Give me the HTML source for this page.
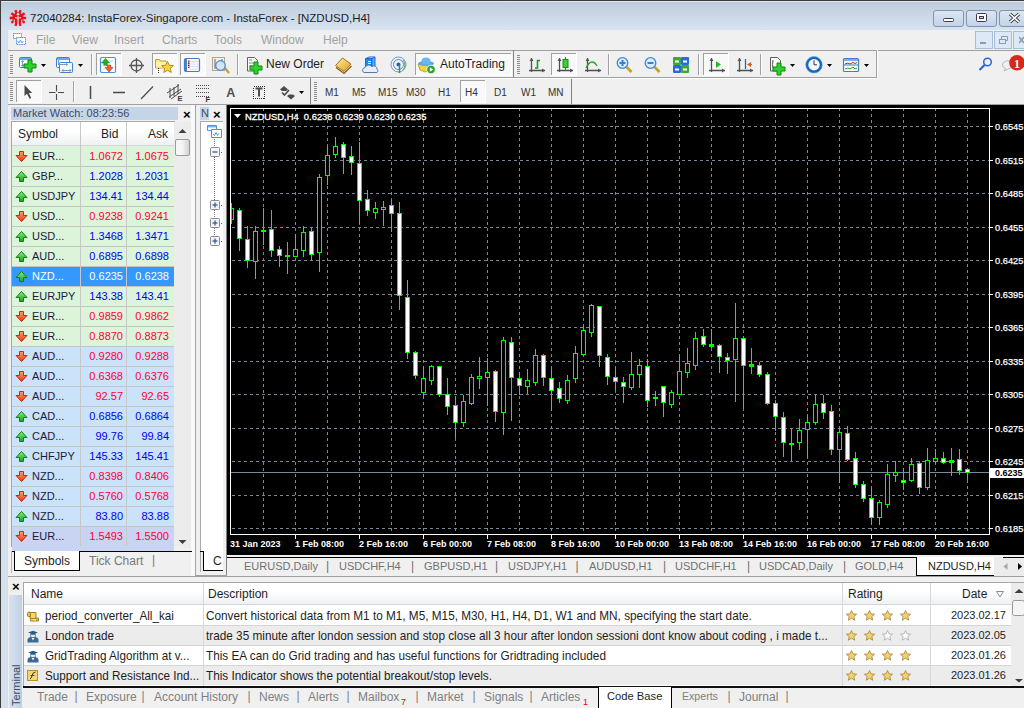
<!DOCTYPE html><html><head><meta charset="utf-8"><style>
html,body{margin:0;padding:0;width:1024px;height:708px;overflow:hidden;background:#f0f0f0;font-family:"Liberation Sans", sans-serif;}
.t{position:absolute;white-space:nowrap;line-height:1;}
</style></head><body>

<div style="position:absolute;left:0px;top:0px;width:1024px;height:30px;background:linear-gradient(#bccbdb,#d7e3f1)"></div>
<div style="position:absolute;left:0px;top:0px;width:1024px;height:1px;background:#3c3c3c"></div>
<div style="position:absolute;left:1px;top:1px;width:1023px;height:1px;background:#dfe7f0"></div>
<div style="position:absolute;left:0px;top:0px;width:1px;height:708px;background:#3c3c3c"></div>
<div style="position:absolute;left:1px;top:30px;width:7px;height:678px;background:#d5e1ef"></div>
<div class="t" style="left:30px;top:13px;font-size:11.5px;color:#1e1e1e">72040284: InstaForex-Singapore.com - InstaForex - [NZDUSD,H4]</div>
<div style="position:absolute;left:933px;top:10px;width:31px;height:17px;background:linear-gradient(#dbe6f2,#c3d3e6);border:1px solid #8294ae;border-radius:3px;box-sizing:border-box"></div>
<div style="position:absolute;left:966px;top:10px;width:31px;height:17px;background:linear-gradient(#dbe6f2,#c3d3e6);border:1px solid #8294ae;border-radius:3px;box-sizing:border-box"></div>
<div style="position:absolute;left:999px;top:10px;width:31px;height:17px;background:linear-gradient(#dbe6f2,#c3d3e6);border:1px solid #8294ae;border-radius:3px;box-sizing:border-box"></div>
<svg width="20" height="20" style="position:absolute;left:8px;top:8px" viewBox="8 8 20 20"><g fill="#e8141c"><circle cx="18" cy="18" r="5.6"/><rect x="16.8" y="9.8" width="2.4" height="3.5" transform="rotate(-90 18 18)"/><rect x="16.8" y="9.8" width="2.4" height="3.5" transform="rotate(-54 18 18)"/><rect x="16.8" y="9.8" width="2.4" height="3.5" transform="rotate(-18 18 18)"/><rect x="16.8" y="9.8" width="2.4" height="3.5" transform="rotate(18 18 18)"/><rect x="16.8" y="9.8" width="2.4" height="3.5" transform="rotate(54 18 18)"/><rect x="16.8" y="9.8" width="2.4" height="3.5" transform="rotate(90 18 18)"/><rect x="16.8" y="9.8" width="2.4" height="3.5" transform="rotate(126 18 18)"/><rect x="16.8" y="9.8" width="2.4" height="3.5" transform="rotate(162 18 18)"/><rect x="16.8" y="9.8" width="2.4" height="3.5" transform="rotate(198 18 18)"/><rect x="16.8" y="9.8" width="2.4" height="3.5" transform="rotate(234 18 18)"/><rect x="16.8" y="9.8" width="2.4" height="3.5" transform="rotate(270 18 18)"/></g><circle cx="18" cy="14.2" r="1.3" fill="#d4e0ee"/><path d="M15 17.5q3 1.5 6 0M18 16v9" stroke="#d4e0ee" stroke-width="1.2" fill="none"/><path d="M14.2 19.5v4M21.8 19.5v4" stroke="#d4e0ee" stroke-width="1"/></svg>
<div style="position:absolute;left:8px;top:30px;width:1016px;height:20px;background:#f0f0f0"></div>
<div class="t" style="left:36px;top:34px;font-size:12px;color:#a0a0a0">File</div>
<div class="t" style="left:72px;top:34px;font-size:12px;color:#a0a0a0">View</div>
<div class="t" style="left:114px;top:34px;font-size:12px;color:#a0a0a0">Insert</div>
<div class="t" style="left:162px;top:34px;font-size:12px;color:#a0a0a0">Charts</div>
<div class="t" style="left:214px;top:34px;font-size:12px;color:#a0a0a0">Tools</div>
<div class="t" style="left:261px;top:34px;font-size:12px;color:#a0a0a0">Window</div>
<div class="t" style="left:323px;top:34px;font-size:12px;color:#a0a0a0">Help</div>
<div style="position:absolute;left:975px;top:31px;width:18px;height:18px;background:#dde9f6;border:1px solid #a9bdd6;box-sizing:border-box"></div>
<div style="position:absolute;left:994px;top:31px;width:18px;height:18px;background:#dde9f6;border:1px solid #a9bdd6;box-sizing:border-box"></div>
<div style="position:absolute;left:1013px;top:31px;width:18px;height:18px;background:#dde9f6;border:1px solid #a9bdd6;box-sizing:border-box"></div>
<svg width="1024" height="50" style="position:absolute;left:0;top:0"><rect x="943.5" y="18.5" width="10" height="3" rx="1" fill="#fff" stroke="#3c3c4c" stroke-width="1"/><rect x="976.5" y="13.5" width="10" height="8" rx="1" fill="#fff" stroke="#3c3c4c" stroke-width="1"/><rect x="979.5" y="16.5" width="4" height="2" fill="#c8d4e4" stroke="#3c3c4c" stroke-width="1"/><path d="M1010 14l9 8M1019 14l-9 8" stroke="#3c3c4c" stroke-width="3.4"/><path d="M1010 14l9 8M1019 14l-9 8" stroke="#fff" stroke-width="1.6"/><path d="M13.5 33.5h8v5h-8z" fill="#fff" stroke="#4a8ae8" stroke-dasharray="1.2,0.6"/><path d="M16.5 37.5h9v7h-9z" fill="#fff" stroke="#4a8ae8" stroke-dasharray="1.2,0.6"/><path d="M17.5 41l1.5 2 1.5-3 1.5 3 1.5-2" stroke="#4a8ae8" fill="none" stroke-width="0.8"/><rect x="980" y="42" width="6" height="2" fill="#8a9ab0"/><rect x="999.5" y="39.5" width="6" height="4" fill="none" stroke="#8a9ab0"/><path d="M1001.5 39.5v-3h6v4h-2" fill="none" stroke="#8a9ab0"/><path d="M1019 37l5 6M1024 37l-5 6" stroke="#8a9ab0" stroke-width="1.5"/></svg>
<div style="position:absolute;left:8px;top:50px;width:1016px;height:1px;background:#a0a0a0"></div>
<div style="position:absolute;left:8px;top:104px;width:1016px;height:1px;background:#a0a0a0"></div>
<svg width="1024" height="55" viewBox="0 50 1024 55" style="position:absolute;left:0;top:50px" font-family="Liberation Sans, sans-serif"><rect x="10" y="55" width="3" height="1" fill="#8c8c8c"/><rect x="10" y="57" width="3" height="1" fill="#8c8c8c"/><rect x="10" y="59" width="3" height="1" fill="#8c8c8c"/><rect x="10" y="61" width="3" height="1" fill="#8c8c8c"/><rect x="10" y="63" width="3" height="1" fill="#8c8c8c"/><rect x="10" y="65" width="3" height="1" fill="#8c8c8c"/><rect x="10" y="67" width="3" height="1" fill="#8c8c8c"/><rect x="10" y="69" width="3" height="1" fill="#8c8c8c"/><rect x="10" y="71" width="3" height="1" fill="#8c8c8c"/><rect x="10" y="73" width="3" height="1" fill="#8c8c8c"/><rect x="19.5" y="57.5" width="12" height="10" rx="1" fill="#f4f8fc" stroke="#3f7fcf"/><rect x="20" y="58" width="11" height="2" fill="#6aa6e8"/><path d="M22.5 61v5" stroke="#7a9abb" stroke-width="1"/><path d="M21 62l1.5-1.5 1.5 1.5M21 65l1.5 1.5 1.5-1.5" stroke="#7a9abb" fill="none" stroke-width="0.9"/><path d="M28 60h4v4h4v4h-4v4h-4v-4h-4v-4h4z" fill="#2ed12e" stroke="#0b8a0b" stroke-width="1"/><path d="M41 64h5l-2.5 3z" fill="#000"/><rect x="56.5" y="57.5" width="13" height="10" rx="1" fill="#f4f8fc" stroke="#3f7fcf"/><rect x="57" y="58" width="12" height="2" fill="#6aa6e8"/><rect x="59.5" y="62.5" width="13" height="10" rx="1" fill="#f4f8fc" stroke="#3f7fcf"/><path d="M58.5 60v5M58.5 64.5h9M62 70.5h9" stroke="#7a9abb" stroke-width="1" fill="none"/><path d="M66 63l1.5 1.5-1.5 1.5M63.5 69l-1.5 1.5 1.5 1.5M69.5 69l1.5 1.5-1.5 1.5" stroke="#7a9abb" fill="none" stroke-width="0.9"/><path d="M78 64h5l-2.5 3z" fill="#000"/><rect x="91" y="54" width="1" height="21" fill="#a0a0a0"/><rect x="92" y="54" width="1" height="21" fill="#fff"/><rect x="96" y="53" width="25" height="22" fill="#f9f9f9"/><rect x="96" y="53" width="25" height="1" fill="#a0a0a0"/><rect x="96" y="53" width="1" height="22" fill="#a0a0a0"/><rect x="96" y="75" width="26" height="1" fill="#fff"/><rect x="121" y="53" width="1" height="22" fill="#fff"/><rect x="100.5" y="57.5" width="15" height="15" rx="1.5" fill="#fff" stroke="#4a90e0" stroke-width="1.2"/><path d="M101.5 63l4-4.5 4 4.5h-2.3v2.5h-3.4v-2.5z" fill="#22b022" stroke="#128012" stroke-width="0.6"/><path d="M107.3 65h3.4v2.5h2.3l-4 4.5-4-4.5h2.3z" fill="#f06030" stroke="#c03010" stroke-width="0.6"/><path d="M109 61h4M103 66h3M103 69h3" stroke="#c8d4e0" stroke-width="1"/><circle cx="136.5" cy="65.5" r="5.5" fill="none" stroke="#555" stroke-width="1.3"/><path d="M136.5 58v15M129 65.5h15" stroke="#555" stroke-width="1.3"/><rect x="152" y="53" width="25" height="22" fill="#f9f9f9"/><rect x="152" y="53" width="25" height="1" fill="#a0a0a0"/><rect x="152" y="53" width="1" height="22" fill="#a0a0a0"/><rect x="152" y="75" width="26" height="1" fill="#fff"/><rect x="177" y="53" width="1" height="22" fill="#fff"/><path d="M155.5 59.5h4l1 1.5h5.5v7h-10.5z" fill="#f8e58a" stroke="#c8a030" stroke-width="1"/><rect x="156" y="62" width="10" height="5.5" fill="#fdf0a8"/><path d="M158.5 68v1M158.5 70v1M158.5 72v1" stroke="#333" stroke-width="1"/><path d="M167.5 61.5l1.8 3.8 4.1.4-3.1 2.7.9 4-3.7-2.1-3.7 2.1.9-4-3.1-2.7 4.1-.4z" fill="#f6d44a" stroke="#b8901a" stroke-width="1"/><rect x="180" y="53" width="25" height="22" fill="#f9f9f9"/><rect x="180" y="53" width="25" height="1" fill="#a0a0a0"/><rect x="180" y="53" width="1" height="22" fill="#a0a0a0"/><rect x="180" y="75" width="26" height="1" fill="#fff"/><rect x="205" y="53" width="1" height="22" fill="#fff"/><rect x="184.5" y="58.5" width="15" height="13" rx="1.5" fill="#fff" stroke="#3f7fcf" stroke-width="1.2"/><rect x="185" y="59" width="2" height="12" fill="#4a80c8"/><path d="M189 61.5h10M189 64h10M189 66.5h10M189 69h10" stroke="#c0d4f2" stroke-width="0.8"/><rect x="188" y="60.5" width="1.5" height="1.5" fill="#e02020"/><rect x="188" y="62.5" width="1.5" height="1.5" fill="#333"/><rect x="188" y="64.5" width="1.5" height="1.5" fill="#333"/><rect x="188" y="66.5" width="1.5" height="1.5" fill="#e02020"/><rect x="212.5" y="57.5" width="12" height="13" fill="#f4f0e8" stroke="#b0a890" stroke-width="1"/><path d="M215 59v10M222 59v6" stroke="#666" stroke-width="1"/><path d="M225 68l4 5" stroke="#c8a020" stroke-width="2.2"/><circle cx="220.5" cy="65.5" r="4.8" fill="#cfe4f8" fill-opacity="0.85" stroke="#4a88d0" stroke-width="1.2"/><rect x="237" y="54" width="1" height="21" fill="#a0a0a0"/><rect x="238" y="54" width="1" height="21" fill="#fff"/><path d="M247.5 57.5h7l3 3v10.5h-10z" fill="#fafafa" stroke="#606060" stroke-width="1"/><path d="M249 60h3M249 63h6M249 66h4" stroke="#888" stroke-width="1"/><path d="M254 62h4v4h4v4h-4v4h-4v-4h-4v-4h4z" fill="#2ed12e" stroke="#0b8a0b" stroke-width="1"/><defs><linearGradient id="gb" x1="0" y1="0" x2="1" y2="1"><stop offset="0" stop-color="#fff0a0"/><stop offset="1" stop-color="#d8a020"/></linearGradient></defs><path d="M335.5 65.5l7-7.5 8.5 6-7 7.5z" fill="url(#gb)" stroke="#a87018" stroke-width="1"/><path d="M336 67.5l8 6 7.5-7.5" fill="none" stroke="#8a5a10" stroke-width="1.3"/><path d="M365.5 58.5h6.5v10h-6.5z" fill="#1a8af0" stroke="#1a6ad0" stroke-width="1"/><path d="M372 58.5l3-1.5v10l-3 1.5z" fill="#5ab0f8" stroke="#1a6ad0" stroke-width="1"/><path d="M366 58.5l3-1.5h6" fill="none" stroke="#1a6ad0"/><path d="M368 61.5h3M368 63.5h3" stroke="#e0f0ff" stroke-width="1"/><path d="M364 72.5a2.5 2.5 0 0 1 1-4.8a4 4 0 0 1 7-1a3 3 0 0 1 5 2.5a2 2 0 0 1 0 3.3z" fill="#e8eef6" stroke="#5a7aa8" stroke-width="1"/><circle cx="398.5" cy="64.5" r="7.5" fill="none" stroke="#6a9ad8" stroke-width="1"/><circle cx="398.5" cy="64.5" r="5" fill="none" stroke="#5a8ad0" stroke-width="1"/><circle cx="398.5" cy="64.5" r="2" fill="#2a5ac8"/><path d="M399.5 65v8" stroke="#2aa02a" stroke-width="1.5"/><path d="M403 60a7.5 7.5 0 0 1 0 10" stroke="#5aaa5a" stroke-width="1" fill="none"/><rect x="415" y="53" width="96" height="22" fill="#f9f9f9"/><rect x="415" y="53" width="96" height="1" fill="#a0a0a0"/><rect x="415" y="53" width="1" height="22" fill="#a0a0a0"/><rect x="415" y="75" width="97" height="1" fill="#fff"/><rect x="511" y="53" width="1" height="22" fill="#fff"/><path d="M420 70l-2-6h14l-2 6l-5 2z" fill="#f2d24a" stroke="#b8901a" stroke-width="0.8"/><ellipse cx="426" cy="63.5" rx="8" ry="2.5" fill="#5aa8e0"/><ellipse cx="426" cy="61" rx="4.5" ry="3.5" fill="#6ab8f0"/><circle cx="431" cy="69.5" r="4.3" fill="#22a822" stroke="#fff" stroke-width="0.8"/><path d="M429.8 67.2v4.6l3.5-2.3z" fill="#fff"/><rect x="513" y="50" width="1" height="27" fill="#808080"/><rect x="8" y="77" width="868" height="1" fill="#a0a0a0"/><rect x="8" y="78" width="868" height="1" fill="#fff"/><rect x="876" y="50" width="1" height="28" fill="#a0a0a0"/><rect x="877" y="50" width="1" height="28" fill="#fff"/><rect x="517" y="55" width="3" height="1" fill="#8c8c8c"/><rect x="517" y="57" width="3" height="1" fill="#8c8c8c"/><rect x="517" y="59" width="3" height="1" fill="#8c8c8c"/><rect x="517" y="61" width="3" height="1" fill="#8c8c8c"/><rect x="517" y="63" width="3" height="1" fill="#8c8c8c"/><rect x="517" y="65" width="3" height="1" fill="#8c8c8c"/><rect x="517" y="67" width="3" height="1" fill="#8c8c8c"/><rect x="517" y="69" width="3" height="1" fill="#8c8c8c"/><rect x="517" y="71" width="3" height="1" fill="#8c8c8c"/><rect x="517" y="73" width="3" height="1" fill="#8c8c8c"/><path d="M531.5 58V72M529 70.5H545" stroke="#505050" stroke-width="1.3" fill="none"/><path d="M529.5 61l2-3 2 3z M542 68.5l3 2-3 2z" fill="#505050"/><path d="M535 68h2.5v-7.5h2.5" stroke="#1a9a1a" stroke-width="1.6" fill="none"/><rect x="551" y="53" width="25" height="22" fill="#f9f9f9"/><rect x="551" y="53" width="25" height="1" fill="#a0a0a0"/><rect x="551" y="53" width="1" height="22" fill="#a0a0a0"/><rect x="551" y="75" width="26" height="1" fill="#fff"/><rect x="576" y="53" width="1" height="22" fill="#fff"/><path d="M559.5 58V72M557 70.5H573" stroke="#505050" stroke-width="1.3" fill="none"/><path d="M557.5 61l2-3 2 3z M570 68.5l3 2-3 2z" fill="#505050"/><path d="M565.5 57v13" stroke="#1a9a1a" stroke-width="1.2"/><rect x="563" y="59.5" width="5" height="8" fill="#3ad03a" stroke="#1a8a1a" stroke-width="1"/><path d="M587.5 58V72M585 70.5H601" stroke="#505050" stroke-width="1.3" fill="none"/><path d="M585.5 61l2-3 2 3z M598 68.5l3 2-3 2z" fill="#505050"/><path d="M586 68q3-6 6-6t5 4" stroke="#2aa02a" stroke-width="1.3" fill="none"/><rect x="608" y="54" width="1" height="21" fill="#a0a0a0"/><rect x="609" y="54" width="1" height="21" fill="#fff"/><path d="M626.5 67l5 5" stroke="#c8a020" stroke-width="2.6"/><circle cx="622.5" cy="63" r="5.3" fill="#d8ecfb" stroke="#3f88d8" stroke-width="1.3"/><path d="M619.5 63h6" stroke="#3a80c8" stroke-width="2"/><path d="M622.5 60v6" stroke="#3a80c8" stroke-width="2"/><path d="M654.5 67l5 5" stroke="#c8a020" stroke-width="2.6"/><circle cx="650.5" cy="63" r="5.3" fill="#d8ecfb" stroke="#3f88d8" stroke-width="1.3"/><path d="M647.5 63h6" stroke="#3a80c8" stroke-width="2"/><rect x="673" y="57" width="8" height="8" rx="1" fill="#3aa83a"/><rect x="681" y="57" width="8" height="8" rx="1" fill="#2a6ae0"/><rect x="673" y="65" width="8" height="8" rx="1" fill="#2a6ae0"/><rect x="681" y="65" width="8" height="8" rx="1" fill="#3aa83a"/><path d="M675 61.5h4M683 61.5h4M675 69.5h4M683 69.5h4" stroke="#fff" stroke-width="2"/><rect x="698" y="54" width="1" height="21" fill="#a0a0a0"/><rect x="699" y="54" width="1" height="21" fill="#fff"/><rect x="703" y="53" width="25" height="22" fill="#f9f9f9"/><rect x="703" y="53" width="25" height="1" fill="#a0a0a0"/><rect x="703" y="53" width="1" height="22" fill="#a0a0a0"/><rect x="703" y="75" width="26" height="1" fill="#fff"/><rect x="728" y="53" width="1" height="22" fill="#fff"/><path d="M711.5 58V72M709 70.5H725" stroke="#505050" stroke-width="1.3" fill="none"/><path d="M709.5 61l2-3 2 3z M722 68.5l3 2-3 2z" fill="#505050"/><path d="M716 61v7l5-3.5z" fill="#2ab82a"/><path d="M739.5 58V72M737 70.5H753" stroke="#505050" stroke-width="1.3" fill="none"/><path d="M737.5 61l2-3 2 3z M750 68.5l3 2-3 2z" fill="#505050"/><path d="M745.5 59v10" stroke="#2a6aa8" stroke-width="1.3"/><path d="M747 64.5l4-2.5v5z" fill="#e05a1a"/><path d="M749 64.5h3" stroke="#e05a1a"/><rect x="760" y="54" width="1" height="21" fill="#a0a0a0"/><rect x="761" y="54" width="1" height="21" fill="#fff"/><path d="M770.5 57.5h7l3 3v10.5h-10z" fill="#fafafa" stroke="#606060" stroke-width="1"/><path d="M773 60q-1 5 0 8" stroke="#555" fill="none"/><path d="M777 63h4v4h4v4h-4v4h-4v-4h-4v-4h4z" fill="#2ed12e" stroke="#0b8a0b" stroke-width="1"/><path d="M790 64h5l-2.5 3z" fill="#000"/><circle cx="814" cy="64.8" r="7" fill="#f4f8fc" stroke="#1464c0" stroke-width="2.6"/><circle cx="814" cy="64.8" r="8.2" fill="none" stroke="#5aa0e8" stroke-width="0.6"/><path d="M814 60.5v4.3h3" stroke="#333" stroke-width="1" fill="none"/><path d="M827 64h5l-2.5 3z" fill="#000"/><rect x="843.5" y="58.5" width="15" height="13" rx="1" fill="#fff" stroke="#3f7fcf" stroke-width="1.2"/><rect x="844" y="59" width="14" height="2" fill="#7ab0e8"/><path d="M844 65h14" stroke="#3f7fcf"/><path d="M845 64l3-1 2 1 3-1.5 2 1 2-1" stroke="#b03010" fill="none"/><path d="M845 69l3-1 2 1 3-2 2 2 2-1" stroke="#20a020" fill="none"/><path d="M864 64h5l-2.5 3z" fill="#000"/><circle cx="987.5" cy="62" r="3.8" fill="none" stroke="#2a64d8" stroke-width="1.5"/><path d="M984.5 65l-5 5" stroke="#2a64d8" stroke-width="2.2"/><path d="M1004 71l1.5-2.5a5 4 0 1 1 4 0z" fill="#f0f0f0" stroke="#b8b8b8" stroke-width="1"/><circle cx="1017" cy="62.7" r="7.8" fill="#d8281a"/><text x="1017" y="67.5" text-anchor="middle" font-size="12" font-weight="bold" fill="#fff" font-family="Liberation Serif, serif">1</text><rect x="10" y="82" width="3" height="1" fill="#8c8c8c"/><rect x="10" y="84" width="3" height="1" fill="#8c8c8c"/><rect x="10" y="86" width="3" height="1" fill="#8c8c8c"/><rect x="10" y="88" width="3" height="1" fill="#8c8c8c"/><rect x="10" y="90" width="3" height="1" fill="#8c8c8c"/><rect x="10" y="92" width="3" height="1" fill="#8c8c8c"/><rect x="10" y="94" width="3" height="1" fill="#8c8c8c"/><rect x="10" y="96" width="3" height="1" fill="#8c8c8c"/><rect x="10" y="98" width="3" height="1" fill="#8c8c8c"/><rect x="10" y="100" width="3" height="1" fill="#8c8c8c"/><rect x="16" y="80" width="25" height="22" fill="#f9f9f9"/><rect x="16" y="80" width="25" height="1" fill="#a0a0a0"/><rect x="16" y="80" width="1" height="22" fill="#a0a0a0"/><rect x="16" y="102" width="26" height="1" fill="#fff"/><rect x="41" y="80" width="1" height="22" fill="#fff"/><path d="M24.5 85v11l2.5-2.3 2.5 5 1.7-.8-2.3-4.9h3.3z" fill="#4a4a4a"/><path d="M56.5 85v6.5M56.5 94v6M49 92.5h6.5M58 92.5h6" stroke="#4a4a4a" stroke-width="1.1"/><rect x="73" y="81" width="1" height="21" fill="#a0a0a0"/><rect x="74" y="81" width="1" height="21" fill="#fff"/><path d="M90.5 86v13" stroke="#4a4a4a" stroke-width="1.5"/><path d="M113 92.5h12" stroke="#4a4a4a" stroke-width="1.5"/><path d="M141 99l12-12.5" stroke="#4a4a4a" stroke-width="1.2"/><path d="M167 93l12-8M169 97l12-8M171 99l11-8" stroke="#4a4a4a" stroke-width="1" fill="none"/><path d="M170 88v10M174 87v9M178 84v10" stroke="#4a4a4a" stroke-width="1"/><text x="177.5" y="101" font-size="7.5" font-weight="bold" fill="#333">E</text><path d="M196 85.5h13" stroke="#4a4a4a" stroke-dasharray="1,1" stroke-width="1"/><path d="M196 88.5h13" stroke="#4a4a4a" stroke-dasharray="1,1" stroke-width="1"/><path d="M196 92.5h13" stroke="#4a4a4a" stroke-dasharray="1,1" stroke-width="1"/><path d="M196 96.5h13" stroke="#4a4a4a" stroke-dasharray="1,1" stroke-width="1"/><text x="205.5" y="101.5" font-size="7.5" font-weight="bold" fill="#333">F</text><text x="226.3" y="97" font-size="12.5" font-weight="bold" fill="#505050">A</text><rect x="253.5" y="86.5" width="11" height="12" fill="none" stroke="#303030" stroke-dasharray="1,1" stroke-width="1" shape-rendering="crispEdges"/><path d="M255.5 88.5h7M259 88.5v8" stroke="#505050" stroke-width="2"/><path d="M280 89.5l4-3.5 4 3.5l-2 1.5h-4z M287 96l4 3.5 4-3.5l-2-1.5h-4z" fill="#4a4a4a"/><path d="M282 92.5l2.5 2.5 4.5-5" stroke="#4a4a4a" stroke-width="1.6" fill="none"/><path d="M299 91h5l-2.5 3z" fill="#000"/><rect x="310" y="78" width="1" height="26" fill="#808080"/><rect x="314" y="82" width="3" height="1" fill="#8c8c8c"/><rect x="314" y="84" width="3" height="1" fill="#8c8c8c"/><rect x="314" y="86" width="3" height="1" fill="#8c8c8c"/><rect x="314" y="88" width="3" height="1" fill="#8c8c8c"/><rect x="314" y="90" width="3" height="1" fill="#8c8c8c"/><rect x="314" y="92" width="3" height="1" fill="#8c8c8c"/><rect x="314" y="94" width="3" height="1" fill="#8c8c8c"/><rect x="314" y="96" width="3" height="1" fill="#8c8c8c"/><rect x="314" y="98" width="3" height="1" fill="#8c8c8c"/><rect x="314" y="100" width="3" height="1" fill="#8c8c8c"/><rect x="460" y="80" width="25" height="22" fill="#f9f9f9"/><rect x="460" y="80" width="25" height="1" fill="#a0a0a0"/><rect x="460" y="80" width="1" height="22" fill="#a0a0a0"/><rect x="460" y="102" width="26" height="1" fill="#fff"/><rect x="485" y="80" width="1" height="22" fill="#fff"/><rect x="571" y="79" width="1" height="25" fill="#808080"/></svg>
<div class="t" style="left:266px;top:58px;font-size:12px;color:#1e1e1e">New Order</div>
<div class="t" style="left:440px;top:58px;font-size:12px;color:#1e1e1e">AutoTrading</div>
<div class="t" style="left:325px;top:88px;font-size:10px;color:#333">M1</div>
<div class="t" style="left:352px;top:88px;font-size:10px;color:#333">M5</div>
<div class="t" style="left:378px;top:88px;font-size:10px;color:#333">M15</div>
<div class="t" style="left:406px;top:88px;font-size:10px;color:#333">M30</div>
<div class="t" style="left:438px;top:88px;font-size:10px;color:#333">H1</div>
<div class="t" style="left:465px;top:88px;font-size:10px;color:#333">H4</div>
<div class="t" style="left:494px;top:88px;font-size:10px;color:#333">D1</div>
<div class="t" style="left:521px;top:88px;font-size:10px;color:#333">W1</div>
<div class="t" style="left:548px;top:88px;font-size:10px;color:#333">MN</div>
<div style="position:absolute;left:11px;top:107px;width:167px;height:13px;background:#c5d5e8"></div>
<div class="t" style="left:13px;top:108px;font-size:11px;color:#3d4c66">Market Watch: 08:23:56</div>
<div class="t" style="left:183px;top:108px;font-size:13px;color:#000;font-weight:bold">&#215;</div>
<div style="position:absolute;left:11px;top:121px;width:164px;height:426px;background:#fff;border-top:1px solid #a8a8a8;border-left:1px solid #a8a8a8;box-sizing:border-box"></div>
<div style="position:absolute;left:12px;top:122px;width:162px;height:23px;background:linear-gradient(#fff 40%,#eef0f3)"></div>
<div style="position:absolute;left:12px;top:145px;width:162px;height:1px;background:#d5d5d5"></div>
<div class="t" style="left:18px;top:128px;font-size:12px;color:#1e1e1e">Symbol</div>
<div class="t" style="left:101px;top:128px;font-size:12px;color:#1e1e1e">Bid</div>
<div class="t" style="left:148px;top:128px;font-size:12px;color:#1e1e1e">Ask</div>
<div style="position:absolute;left:12px;top:146px;width:162px;height:20px;background:#dcf4da"></div>
<svg style="position:absolute;left:15px;top:150px" width="13" height="13"><defs><linearGradient id="gd0" x1="0" y1="0" x2="0" y2="1"><stop offset="0" stop-color="#ffa070"/><stop offset="1" stop-color="#e83a10"/></linearGradient></defs><path d="M4.5 1.5h4v4h3.5l-5.5 6-5.5-6h3.5z" fill="url(#gd0)" stroke="#b83010" stroke-width="1"/></svg>
<div class="t" style="left:32px;top:151px;font-size:11px;color:#1a1a3a">EUR...</div>
<div class="t" style="left:81px;top:151px;font-size:11px;color:#ff0033;width:42px;text-align:right">1.0672</div>
<div class="t" style="left:127px;top:151px;font-size:11px;color:#ff0033;width:42px;text-align:right">1.0675</div>
<div style="position:absolute;left:12px;top:166px;width:162px;height:20px;background:#dcf4da"></div>
<div style="position:absolute;left:12px;top:166px;width:162px;height:1px;background:#c4c4c4"></div>
<svg style="position:absolute;left:15px;top:170px" width="13" height="13"><defs><linearGradient id="gu1" x1="0" y1="0" x2="0" y2="1"><stop offset="0" stop-color="#80f080"/><stop offset="1" stop-color="#20a020"/></linearGradient></defs><path d="M4.5 11.5h4v-4h3.5l-5.5-6-5.5 6h3.5z" fill="url(#gu1)" stroke="#108010" stroke-width="1"/></svg>
<div class="t" style="left:32px;top:171px;font-size:11px;color:#1a1a3a">GBP...</div>
<div class="t" style="left:81px;top:171px;font-size:11px;color:#0000ee;width:42px;text-align:right">1.2028</div>
<div class="t" style="left:127px;top:171px;font-size:11px;color:#0000ee;width:42px;text-align:right">1.2031</div>
<div style="position:absolute;left:12px;top:186px;width:162px;height:20px;background:#dcf4da"></div>
<div style="position:absolute;left:12px;top:186px;width:162px;height:1px;background:#c4c4c4"></div>
<svg style="position:absolute;left:15px;top:190px" width="13" height="13"><defs><linearGradient id="gu2" x1="0" y1="0" x2="0" y2="1"><stop offset="0" stop-color="#80f080"/><stop offset="1" stop-color="#20a020"/></linearGradient></defs><path d="M4.5 11.5h4v-4h3.5l-5.5-6-5.5 6h3.5z" fill="url(#gu2)" stroke="#108010" stroke-width="1"/></svg>
<div class="t" style="left:32px;top:191px;font-size:11px;color:#1a1a3a">USDJPY</div>
<div class="t" style="left:81px;top:191px;font-size:11px;color:#0000ee;width:42px;text-align:right">134.41</div>
<div class="t" style="left:127px;top:191px;font-size:11px;color:#0000ee;width:42px;text-align:right">134.44</div>
<div style="position:absolute;left:12px;top:206px;width:162px;height:20px;background:#dcf4da"></div>
<div style="position:absolute;left:12px;top:206px;width:162px;height:1px;background:#c4c4c4"></div>
<svg style="position:absolute;left:15px;top:210px" width="13" height="13"><defs><linearGradient id="gd3" x1="0" y1="0" x2="0" y2="1"><stop offset="0" stop-color="#ffa070"/><stop offset="1" stop-color="#e83a10"/></linearGradient></defs><path d="M4.5 1.5h4v4h3.5l-5.5 6-5.5-6h3.5z" fill="url(#gd3)" stroke="#b83010" stroke-width="1"/></svg>
<div class="t" style="left:32px;top:211px;font-size:11px;color:#1a1a3a">USD...</div>
<div class="t" style="left:81px;top:211px;font-size:11px;color:#ff0033;width:42px;text-align:right">0.9238</div>
<div class="t" style="left:127px;top:211px;font-size:11px;color:#ff0033;width:42px;text-align:right">0.9241</div>
<div style="position:absolute;left:12px;top:226px;width:162px;height:20px;background:#dcf4da"></div>
<div style="position:absolute;left:12px;top:226px;width:162px;height:1px;background:#c4c4c4"></div>
<svg style="position:absolute;left:15px;top:230px" width="13" height="13"><defs><linearGradient id="gu4" x1="0" y1="0" x2="0" y2="1"><stop offset="0" stop-color="#80f080"/><stop offset="1" stop-color="#20a020"/></linearGradient></defs><path d="M4.5 11.5h4v-4h3.5l-5.5-6-5.5 6h3.5z" fill="url(#gu4)" stroke="#108010" stroke-width="1"/></svg>
<div class="t" style="left:32px;top:231px;font-size:11px;color:#1a1a3a">USD...</div>
<div class="t" style="left:81px;top:231px;font-size:11px;color:#0000ee;width:42px;text-align:right">1.3468</div>
<div class="t" style="left:127px;top:231px;font-size:11px;color:#0000ee;width:42px;text-align:right">1.3471</div>
<div style="position:absolute;left:12px;top:246px;width:162px;height:20px;background:#dcf4da"></div>
<div style="position:absolute;left:12px;top:246px;width:162px;height:1px;background:#c4c4c4"></div>
<svg style="position:absolute;left:15px;top:250px" width="13" height="13"><defs><linearGradient id="gu5" x1="0" y1="0" x2="0" y2="1"><stop offset="0" stop-color="#80f080"/><stop offset="1" stop-color="#20a020"/></linearGradient></defs><path d="M4.5 11.5h4v-4h3.5l-5.5-6-5.5 6h3.5z" fill="url(#gu5)" stroke="#108010" stroke-width="1"/></svg>
<div class="t" style="left:32px;top:251px;font-size:11px;color:#1a1a3a">AUD...</div>
<div class="t" style="left:81px;top:251px;font-size:11px;color:#0000ee;width:42px;text-align:right">0.6895</div>
<div class="t" style="left:127px;top:251px;font-size:11px;color:#0000ee;width:42px;text-align:right">0.6898</div>
<div style="position:absolute;left:12px;top:266px;width:162px;height:20px;background:#3399ff"></div>
<div style="position:absolute;left:12px;top:266px;width:162px;height:1px;background:#c4c4c4"></div>
<svg style="position:absolute;left:15px;top:270px" width="13" height="13"><defs><linearGradient id="gu6" x1="0" y1="0" x2="0" y2="1"><stop offset="0" stop-color="#80f080"/><stop offset="1" stop-color="#20a020"/></linearGradient></defs><path d="M4.5 11.5h4v-4h3.5l-5.5-6-5.5 6h3.5z" fill="url(#gu6)" stroke="#108010" stroke-width="1"/></svg>
<div class="t" style="left:32px;top:271px;font-size:11px;color:#fff">NZD...</div>
<div class="t" style="left:81px;top:271px;font-size:11px;color:#fff;width:42px;text-align:right">0.6235</div>
<div class="t" style="left:127px;top:271px;font-size:11px;color:#fff;width:42px;text-align:right">0.6238</div>
<div style="position:absolute;left:12px;top:286px;width:162px;height:20px;background:#dcf4da"></div>
<div style="position:absolute;left:12px;top:286px;width:162px;height:1px;background:#c4c4c4"></div>
<svg style="position:absolute;left:15px;top:290px" width="13" height="13"><defs><linearGradient id="gu7" x1="0" y1="0" x2="0" y2="1"><stop offset="0" stop-color="#80f080"/><stop offset="1" stop-color="#20a020"/></linearGradient></defs><path d="M4.5 11.5h4v-4h3.5l-5.5-6-5.5 6h3.5z" fill="url(#gu7)" stroke="#108010" stroke-width="1"/></svg>
<div class="t" style="left:32px;top:291px;font-size:11px;color:#1a1a3a">EURJPY</div>
<div class="t" style="left:81px;top:291px;font-size:11px;color:#0000ee;width:42px;text-align:right">143.38</div>
<div class="t" style="left:127px;top:291px;font-size:11px;color:#0000ee;width:42px;text-align:right">143.41</div>
<div style="position:absolute;left:12px;top:306px;width:162px;height:20px;background:#dcf4da"></div>
<div style="position:absolute;left:12px;top:306px;width:162px;height:1px;background:#c4c4c4"></div>
<svg style="position:absolute;left:15px;top:310px" width="13" height="13"><defs><linearGradient id="gd8" x1="0" y1="0" x2="0" y2="1"><stop offset="0" stop-color="#ffa070"/><stop offset="1" stop-color="#e83a10"/></linearGradient></defs><path d="M4.5 1.5h4v4h3.5l-5.5 6-5.5-6h3.5z" fill="url(#gd8)" stroke="#b83010" stroke-width="1"/></svg>
<div class="t" style="left:32px;top:311px;font-size:11px;color:#1a1a3a">EUR...</div>
<div class="t" style="left:81px;top:311px;font-size:11px;color:#ff0033;width:42px;text-align:right">0.9859</div>
<div class="t" style="left:127px;top:311px;font-size:11px;color:#ff0033;width:42px;text-align:right">0.9862</div>
<div style="position:absolute;left:12px;top:326px;width:162px;height:20px;background:#dcf4da"></div>
<div style="position:absolute;left:12px;top:326px;width:162px;height:1px;background:#c4c4c4"></div>
<svg style="position:absolute;left:15px;top:330px" width="13" height="13"><defs><linearGradient id="gd9" x1="0" y1="0" x2="0" y2="1"><stop offset="0" stop-color="#ffa070"/><stop offset="1" stop-color="#e83a10"/></linearGradient></defs><path d="M4.5 1.5h4v4h3.5l-5.5 6-5.5-6h3.5z" fill="url(#gd9)" stroke="#b83010" stroke-width="1"/></svg>
<div class="t" style="left:32px;top:331px;font-size:11px;color:#1a1a3a">EUR...</div>
<div class="t" style="left:81px;top:331px;font-size:11px;color:#ff0033;width:42px;text-align:right">0.8870</div>
<div class="t" style="left:127px;top:331px;font-size:11px;color:#ff0033;width:42px;text-align:right">0.8873</div>
<div style="position:absolute;left:12px;top:346px;width:162px;height:20px;background:#cae2fa"></div>
<div style="position:absolute;left:12px;top:346px;width:162px;height:1px;background:#c4c4c4"></div>
<svg style="position:absolute;left:15px;top:350px" width="13" height="13"><defs><linearGradient id="gd10" x1="0" y1="0" x2="0" y2="1"><stop offset="0" stop-color="#ffa070"/><stop offset="1" stop-color="#e83a10"/></linearGradient></defs><path d="M4.5 1.5h4v4h3.5l-5.5 6-5.5-6h3.5z" fill="url(#gd10)" stroke="#b83010" stroke-width="1"/></svg>
<div class="t" style="left:32px;top:351px;font-size:11px;color:#1a1a3a">AUD...</div>
<div class="t" style="left:81px;top:351px;font-size:11px;color:#ff0033;width:42px;text-align:right">0.9280</div>
<div class="t" style="left:127px;top:351px;font-size:11px;color:#ff0033;width:42px;text-align:right">0.9288</div>
<div style="position:absolute;left:12px;top:366px;width:162px;height:20px;background:#cae2fa"></div>
<div style="position:absolute;left:12px;top:366px;width:162px;height:1px;background:#c4c4c4"></div>
<svg style="position:absolute;left:15px;top:370px" width="13" height="13"><defs><linearGradient id="gd11" x1="0" y1="0" x2="0" y2="1"><stop offset="0" stop-color="#ffa070"/><stop offset="1" stop-color="#e83a10"/></linearGradient></defs><path d="M4.5 1.5h4v4h3.5l-5.5 6-5.5-6h3.5z" fill="url(#gd11)" stroke="#b83010" stroke-width="1"/></svg>
<div class="t" style="left:32px;top:371px;font-size:11px;color:#1a1a3a">AUD...</div>
<div class="t" style="left:81px;top:371px;font-size:11px;color:#ff0033;width:42px;text-align:right">0.6368</div>
<div class="t" style="left:127px;top:371px;font-size:11px;color:#ff0033;width:42px;text-align:right">0.6376</div>
<div style="position:absolute;left:12px;top:386px;width:162px;height:20px;background:#cae2fa"></div>
<div style="position:absolute;left:12px;top:386px;width:162px;height:1px;background:#c4c4c4"></div>
<svg style="position:absolute;left:15px;top:390px" width="13" height="13"><defs><linearGradient id="gd12" x1="0" y1="0" x2="0" y2="1"><stop offset="0" stop-color="#ffa070"/><stop offset="1" stop-color="#e83a10"/></linearGradient></defs><path d="M4.5 1.5h4v4h3.5l-5.5 6-5.5-6h3.5z" fill="url(#gd12)" stroke="#b83010" stroke-width="1"/></svg>
<div class="t" style="left:32px;top:391px;font-size:11px;color:#1a1a3a">AUD...</div>
<div class="t" style="left:81px;top:391px;font-size:11px;color:#ff0033;width:42px;text-align:right">92.57</div>
<div class="t" style="left:127px;top:391px;font-size:11px;color:#ff0033;width:42px;text-align:right">92.65</div>
<div style="position:absolute;left:12px;top:406px;width:162px;height:20px;background:#cae2fa"></div>
<div style="position:absolute;left:12px;top:406px;width:162px;height:1px;background:#c4c4c4"></div>
<svg style="position:absolute;left:15px;top:410px" width="13" height="13"><defs><linearGradient id="gu13" x1="0" y1="0" x2="0" y2="1"><stop offset="0" stop-color="#80f080"/><stop offset="1" stop-color="#20a020"/></linearGradient></defs><path d="M4.5 11.5h4v-4h3.5l-5.5-6-5.5 6h3.5z" fill="url(#gu13)" stroke="#108010" stroke-width="1"/></svg>
<div class="t" style="left:32px;top:411px;font-size:11px;color:#1a1a3a">CAD...</div>
<div class="t" style="left:81px;top:411px;font-size:11px;color:#0000ee;width:42px;text-align:right">0.6856</div>
<div class="t" style="left:127px;top:411px;font-size:11px;color:#0000ee;width:42px;text-align:right">0.6864</div>
<div style="position:absolute;left:12px;top:426px;width:162px;height:20px;background:#cae2fa"></div>
<div style="position:absolute;left:12px;top:426px;width:162px;height:1px;background:#c4c4c4"></div>
<svg style="position:absolute;left:15px;top:430px" width="13" height="13"><defs><linearGradient id="gu14" x1="0" y1="0" x2="0" y2="1"><stop offset="0" stop-color="#80f080"/><stop offset="1" stop-color="#20a020"/></linearGradient></defs><path d="M4.5 11.5h4v-4h3.5l-5.5-6-5.5 6h3.5z" fill="url(#gu14)" stroke="#108010" stroke-width="1"/></svg>
<div class="t" style="left:32px;top:431px;font-size:11px;color:#1a1a3a">CAD...</div>
<div class="t" style="left:81px;top:431px;font-size:11px;color:#0000ee;width:42px;text-align:right">99.76</div>
<div class="t" style="left:127px;top:431px;font-size:11px;color:#0000ee;width:42px;text-align:right">99.84</div>
<div style="position:absolute;left:12px;top:446px;width:162px;height:20px;background:#cae2fa"></div>
<div style="position:absolute;left:12px;top:446px;width:162px;height:1px;background:#c4c4c4"></div>
<svg style="position:absolute;left:15px;top:450px" width="13" height="13"><defs><linearGradient id="gu15" x1="0" y1="0" x2="0" y2="1"><stop offset="0" stop-color="#80f080"/><stop offset="1" stop-color="#20a020"/></linearGradient></defs><path d="M4.5 11.5h4v-4h3.5l-5.5-6-5.5 6h3.5z" fill="url(#gu15)" stroke="#108010" stroke-width="1"/></svg>
<div class="t" style="left:32px;top:451px;font-size:11px;color:#1a1a3a">CHFJPY</div>
<div class="t" style="left:81px;top:451px;font-size:11px;color:#0000ee;width:42px;text-align:right">145.33</div>
<div class="t" style="left:127px;top:451px;font-size:11px;color:#0000ee;width:42px;text-align:right">145.41</div>
<div style="position:absolute;left:12px;top:466px;width:162px;height:20px;background:#cae2fa"></div>
<div style="position:absolute;left:12px;top:466px;width:162px;height:1px;background:#c4c4c4"></div>
<svg style="position:absolute;left:15px;top:470px" width="13" height="13"><defs><linearGradient id="gd16" x1="0" y1="0" x2="0" y2="1"><stop offset="0" stop-color="#ffa070"/><stop offset="1" stop-color="#e83a10"/></linearGradient></defs><path d="M4.5 1.5h4v4h3.5l-5.5 6-5.5-6h3.5z" fill="url(#gd16)" stroke="#b83010" stroke-width="1"/></svg>
<div class="t" style="left:32px;top:471px;font-size:11px;color:#1a1a3a">NZD...</div>
<div class="t" style="left:81px;top:471px;font-size:11px;color:#ff0033;width:42px;text-align:right">0.8398</div>
<div class="t" style="left:127px;top:471px;font-size:11px;color:#ff0033;width:42px;text-align:right">0.8406</div>
<div style="position:absolute;left:12px;top:486px;width:162px;height:20px;background:#cae2fa"></div>
<div style="position:absolute;left:12px;top:486px;width:162px;height:1px;background:#c4c4c4"></div>
<svg style="position:absolute;left:15px;top:490px" width="13" height="13"><defs><linearGradient id="gd17" x1="0" y1="0" x2="0" y2="1"><stop offset="0" stop-color="#ffa070"/><stop offset="1" stop-color="#e83a10"/></linearGradient></defs><path d="M4.5 1.5h4v4h3.5l-5.5 6-5.5-6h3.5z" fill="url(#gd17)" stroke="#b83010" stroke-width="1"/></svg>
<div class="t" style="left:32px;top:491px;font-size:11px;color:#1a1a3a">NZD...</div>
<div class="t" style="left:81px;top:491px;font-size:11px;color:#ff0033;width:42px;text-align:right">0.5760</div>
<div class="t" style="left:127px;top:491px;font-size:11px;color:#ff0033;width:42px;text-align:right">0.5768</div>
<div style="position:absolute;left:12px;top:506px;width:162px;height:20px;background:#cae2fa"></div>
<div style="position:absolute;left:12px;top:506px;width:162px;height:1px;background:#c4c4c4"></div>
<svg style="position:absolute;left:15px;top:510px" width="13" height="13"><defs><linearGradient id="gu18" x1="0" y1="0" x2="0" y2="1"><stop offset="0" stop-color="#80f080"/><stop offset="1" stop-color="#20a020"/></linearGradient></defs><path d="M4.5 11.5h4v-4h3.5l-5.5-6-5.5 6h3.5z" fill="url(#gu18)" stroke="#108010" stroke-width="1"/></svg>
<div class="t" style="left:32px;top:511px;font-size:11px;color:#1a1a3a">NZD...</div>
<div class="t" style="left:81px;top:511px;font-size:11px;color:#0000ee;width:42px;text-align:right">83.80</div>
<div class="t" style="left:127px;top:511px;font-size:11px;color:#0000ee;width:42px;text-align:right">83.88</div>
<div style="position:absolute;left:12px;top:526px;width:162px;height:20px;background:#c9d4f3"></div>
<div style="position:absolute;left:12px;top:526px;width:162px;height:1px;background:#c4c4c4"></div>
<svg style="position:absolute;left:15px;top:530px" width="13" height="13"><defs><linearGradient id="gd19" x1="0" y1="0" x2="0" y2="1"><stop offset="0" stop-color="#ffa070"/><stop offset="1" stop-color="#e83a10"/></linearGradient></defs><path d="M4.5 1.5h4v4h3.5l-5.5 6-5.5-6h3.5z" fill="url(#gd19)" stroke="#b83010" stroke-width="1"/></svg>
<div class="t" style="left:32px;top:531px;font-size:11px;color:#1a1a3a">EUR...</div>
<div class="t" style="left:81px;top:531px;font-size:11px;color:#ff0033;width:42px;text-align:right">1.5493</div>
<div class="t" style="left:127px;top:531px;font-size:11px;color:#ff0033;width:42px;text-align:right">1.5500</div>
<div style="position:absolute;left:80px;top:122px;width:1px;height:425px;background:#c8c8c8"></div>
<div style="position:absolute;left:126px;top:122px;width:1px;height:425px;background:#c8c8c8"></div>
<div style="position:absolute;left:174px;top:122px;width:17px;height:425px;background:#ececec"></div>
<div style="position:absolute;left:175px;top:139px;width:15px;height:17px;background:linear-gradient(90deg,#f6f6f6,#f6f6f6 45%,#d2d2d2);border:1px solid #9a9a9a;border-radius:2px;box-sizing:border-box"></div>
<svg width="17" height="425" style="position:absolute;left:174px;top:122px"><path d="M4.5 11l4-4 4 4z" fill="#404040"/><path d="M4.5 418l4 4 4-4z" fill="#404040"/></svg>
<div style="position:absolute;left:12px;top:546px;width:162px;height:5px;background:#c9d4f3"></div>
<div style="position:absolute;left:191px;top:105px;width:4px;height:471px;background:#fafafa"></div>
<div style="position:absolute;left:195px;top:105px;width:1px;height:471px;background:#a0a0a0"></div>
<div style="position:absolute;left:226px;top:105px;width:1px;height:471px;background:#808080"></div>
<div style="position:absolute;left:196px;top:575px;width:31px;height:1px;background:#a0a0a0"></div>
<div style="position:absolute;left:11px;top:551px;width:1px;height:22px;background:#b8b8b8"></div>
<div style="position:absolute;left:12px;top:551px;width:180px;height:1px;background:#000"></div>
<div style="position:absolute;left:14px;top:551px;width:66px;height:20px;background:#fff;border:1px solid #000;border-top:none;box-sizing:border-box"></div>
<div class="t" style="left:24px;top:555px;font-size:12px;color:#1e1e1e">Symbols</div>
<div class="t" style="left:89px;top:555px;font-size:12px;color:#787878">Tick Chart</div>
<div class="t" style="left:152px;top:554px;font-size:12px;color:#787878">|</div>
<div style="position:absolute;left:200px;top:107px;width:9px;height:13px;background:#c5d5e8"></div>
<div class="t" style="left:201px;top:108px;font-size:11px;color:#3d4c66">N</div>
<div class="t" style="left:213px;top:108px;font-size:13px;color:#000;font-weight:bold">&#215;</div>
<div style="position:absolute;left:200px;top:121px;width:23px;height:430px;background:#fff;border-top:1px solid #a8a8a8;border-left:1px solid #a8a8a8;box-sizing:border-box"></div>
<div style="position:absolute;left:200px;top:551px;width:4px;height:1px;background:#000"></div>
<div style="position:absolute;left:200px;top:552px;width:1px;height:20px;background:#a8a8a8"></div>
<div style="position:absolute;left:203px;top:551px;width:20px;height:20px;background:#fff;border-left:1px solid #000;border-bottom:1px solid #000;box-sizing:border-box"></div>
<div class="t" style="left:213px;top:555px;font-size:12px;color:#1e1e1e">C</div>
<svg width="30" height="140" style="position:absolute;left:200px;top:118px" viewBox="200 118 30 140"><path d="M207.5 125.5h9v5h-9z" fill="#fff" stroke="#4a90e0"/><rect x="208" y="126" width="8" height="1.5" fill="#7ab4ec"/><path d="M211.5 129.5h10v8h-10z" fill="#fff" stroke="#4a90e0"/><path d="M213 134l1.5 1.5 1.5-3 1.5 3 1.5-2" stroke="#4a90e0" fill="none" stroke-width="0.9"/><path d="M214.5 139v9M214.5 157v44M214.5 210v9M214.5 228v9" stroke="#777" stroke-dasharray="1,1"/><rect x="210.5" y="147.5" width="9" height="9" rx="1" fill="#f4f4f4" stroke="#8a8a8a"/><path d="M212.5 152h5" stroke="#3a5a9a" stroke-width="1.3"/><rect x="221" y="152" width="1" height="1" fill="#555"/><rect x="210.5" y="200.5" width="9" height="9" rx="1" fill="#f4f4f4" stroke="#8a8a8a"/><path d="M212.5 205h5" stroke="#3a5a9a" stroke-width="1.3"/><path d="M215 202.5v5" stroke="#3a5a9a" stroke-width="1.3"/><rect x="221" y="205" width="1" height="1" fill="#555"/><rect x="210.5" y="218.5" width="9" height="9" rx="1" fill="#f4f4f4" stroke="#8a8a8a"/><path d="M212.5 223h5" stroke="#3a5a9a" stroke-width="1.3"/><path d="M215 220.5v5" stroke="#3a5a9a" stroke-width="1.3"/><rect x="221" y="223" width="1" height="1" fill="#555"/><rect x="210.5" y="236.5" width="9" height="9" rx="1" fill="#f4f4f4" stroke="#8a8a8a"/><path d="M212.5 241h5" stroke="#3a5a9a" stroke-width="1.3"/><path d="M215 238.5v5" stroke="#3a5a9a" stroke-width="1.3"/><rect x="221" y="241" width="1" height="1" fill="#555"/></svg>
<svg width="797" height="450" style="position:absolute;left:227px;top:105px" shape-rendering="crispEdges"><rect x="0" y="0" width="797" height="450" fill="#000"/><line x1="5" y1="21.5" x2="762" y2="21.5" stroke="#778899" stroke-width="1" stroke-dasharray="3,3"/><line x1="5" y1="55.5" x2="762" y2="55.5" stroke="#778899" stroke-width="1" stroke-dasharray="3,3"/><line x1="5" y1="88.5" x2="762" y2="88.5" stroke="#778899" stroke-width="1" stroke-dasharray="3,3"/><line x1="5" y1="122.5" x2="762" y2="122.5" stroke="#778899" stroke-width="1" stroke-dasharray="3,3"/><line x1="5" y1="155.5" x2="762" y2="155.5" stroke="#778899" stroke-width="1" stroke-dasharray="3,3"/><line x1="5" y1="189.5" x2="762" y2="189.5" stroke="#778899" stroke-width="1" stroke-dasharray="3,3"/><line x1="5" y1="222.5" x2="762" y2="222.5" stroke="#778899" stroke-width="1" stroke-dasharray="3,3"/><line x1="5" y1="256.5" x2="762" y2="256.5" stroke="#778899" stroke-width="1" stroke-dasharray="3,3"/><line x1="5" y1="289.5" x2="762" y2="289.5" stroke="#778899" stroke-width="1" stroke-dasharray="3,3"/><line x1="5" y1="323.5" x2="762" y2="323.5" stroke="#778899" stroke-width="1" stroke-dasharray="3,3"/><line x1="5" y1="356.5" x2="762" y2="356.5" stroke="#778899" stroke-width="1" stroke-dasharray="3,3"/><line x1="5" y1="390.5" x2="762" y2="390.5" stroke="#778899" stroke-width="1" stroke-dasharray="3,3"/><line x1="5" y1="423.5" x2="762" y2="423.5" stroke="#778899" stroke-width="1" stroke-dasharray="3,3"/><line x1="36.5" y1="3" x2="36.5" y2="429" stroke="#778899" stroke-width="1" stroke-dasharray="3,3"/><line x1="68.5" y1="3" x2="68.5" y2="429" stroke="#778899" stroke-width="1" stroke-dasharray="3,3"/><line x1="100.5" y1="3" x2="100.5" y2="429" stroke="#778899" stroke-width="1" stroke-dasharray="3,3"/><line x1="132.5" y1="3" x2="132.5" y2="429" stroke="#778899" stroke-width="1" stroke-dasharray="3,3"/><line x1="164.5" y1="3" x2="164.5" y2="429" stroke="#778899" stroke-width="1" stroke-dasharray="3,3"/><line x1="196.5" y1="3" x2="196.5" y2="429" stroke="#778899" stroke-width="1" stroke-dasharray="3,3"/><line x1="228.5" y1="3" x2="228.5" y2="429" stroke="#778899" stroke-width="1" stroke-dasharray="3,3"/><line x1="260.5" y1="3" x2="260.5" y2="429" stroke="#778899" stroke-width="1" stroke-dasharray="3,3"/><line x1="292.5" y1="3" x2="292.5" y2="429" stroke="#778899" stroke-width="1" stroke-dasharray="3,3"/><line x1="324.5" y1="3" x2="324.5" y2="429" stroke="#778899" stroke-width="1" stroke-dasharray="3,3"/><line x1="356.5" y1="3" x2="356.5" y2="429" stroke="#778899" stroke-width="1" stroke-dasharray="3,3"/><line x1="388.5" y1="3" x2="388.5" y2="429" stroke="#778899" stroke-width="1" stroke-dasharray="3,3"/><line x1="420.5" y1="3" x2="420.5" y2="429" stroke="#778899" stroke-width="1" stroke-dasharray="3,3"/><line x1="452.5" y1="3" x2="452.5" y2="429" stroke="#778899" stroke-width="1" stroke-dasharray="3,3"/><line x1="484.5" y1="3" x2="484.5" y2="429" stroke="#778899" stroke-width="1" stroke-dasharray="3,3"/><line x1="516.5" y1="3" x2="516.5" y2="429" stroke="#778899" stroke-width="1" stroke-dasharray="3,3"/><line x1="548.5" y1="3" x2="548.5" y2="429" stroke="#778899" stroke-width="1" stroke-dasharray="3,3"/><line x1="580.5" y1="3" x2="580.5" y2="429" stroke="#778899" stroke-width="1" stroke-dasharray="3,3"/><line x1="612.5" y1="3" x2="612.5" y2="429" stroke="#778899" stroke-width="1" stroke-dasharray="3,3"/><line x1="644.5" y1="3" x2="644.5" y2="429" stroke="#778899" stroke-width="1" stroke-dasharray="3,3"/><line x1="676.5" y1="3" x2="676.5" y2="429" stroke="#778899" stroke-width="1" stroke-dasharray="3,3"/><line x1="708.5" y1="3" x2="708.5" y2="429" stroke="#778899" stroke-width="1" stroke-dasharray="3,3"/><line x1="740.5" y1="3" x2="740.5" y2="429" stroke="#778899" stroke-width="1" stroke-dasharray="3,3"/><rect x="4" y="367" width="758" height="1" fill="#778899"/><rect x="4" y="98" width="1" height="21" fill="#00ff00"/><rect x="4" y="103" width="3" height="12" fill="#00ff00"/><rect x="5" y="104" width="1" height="10" fill="#000"/><rect x="12" y="103" width="1" height="43" fill="#00ff00"/><rect x="10" y="105" width="5" height="29" fill="#00ff00"/><rect x="11" y="106" width="3" height="27" fill="#fff"/><rect x="20" y="121" width="1" height="42" fill="#00ff00"/><rect x="18" y="134" width="5" height="22" fill="#00ff00"/><rect x="19" y="135" width="3" height="20" fill="#fff"/><rect x="28" y="121" width="1" height="53" fill="#00ff00"/><rect x="26" y="126" width="5" height="31" fill="#00ff00"/><rect x="27" y="127" width="3" height="29" fill="#000"/><rect x="36" y="103" width="1" height="37" fill="#00ff00"/><rect x="34" y="125" width="5" height="2" fill="#00ff00"/><rect x="44" y="105" width="1" height="47" fill="#00ff00"/><rect x="42" y="124" width="5" height="22" fill="#00ff00"/><rect x="43" y="125" width="3" height="20" fill="#fff"/><rect x="52" y="141" width="1" height="21" fill="#00ff00"/><rect x="50" y="144" width="5" height="7" fill="#00ff00"/><rect x="51" y="145" width="3" height="5" fill="#fff"/><rect x="60" y="137" width="1" height="32" fill="#00ff00"/><rect x="58" y="150" width="5" height="2" fill="#00ff00"/><rect x="68" y="129" width="1" height="23" fill="#00ff00"/><rect x="66" y="144" width="5" height="8" fill="#00ff00"/><rect x="67" y="145" width="3" height="6" fill="#000"/><rect x="76" y="121" width="1" height="31" fill="#00ff00"/><rect x="74" y="127" width="5" height="19" fill="#00ff00"/><rect x="75" y="128" width="3" height="17" fill="#000"/><rect x="84" y="123" width="1" height="33" fill="#00ff00"/><rect x="82" y="126" width="5" height="24" fill="#00ff00"/><rect x="83" y="127" width="3" height="22" fill="#fff"/><rect x="92" y="69" width="1" height="98" fill="#00ff00"/><rect x="90" y="72" width="5" height="76" fill="#00ff00"/><rect x="91" y="73" width="3" height="74" fill="#000"/><rect x="100" y="41" width="1" height="39" fill="#00ff00"/><rect x="98" y="50" width="5" height="21" fill="#00ff00"/><rect x="99" y="51" width="3" height="19" fill="#000"/><rect x="108" y="32" width="1" height="21" fill="#00ff00"/><rect x="106" y="41" width="5" height="9" fill="#00ff00"/><rect x="107" y="42" width="3" height="7" fill="#000"/><rect x="116" y="37" width="1" height="32" fill="#00ff00"/><rect x="114" y="39" width="5" height="14" fill="#00ff00"/><rect x="115" y="40" width="3" height="12" fill="#fff"/><rect x="124" y="41" width="1" height="29" fill="#00ff00"/><rect x="122" y="51" width="5" height="7" fill="#00ff00"/><rect x="123" y="52" width="3" height="5" fill="#fff"/><rect x="132" y="37" width="1" height="82" fill="#00ff00"/><rect x="130" y="58" width="5" height="38" fill="#00ff00"/><rect x="131" y="59" width="3" height="36" fill="#fff"/><rect x="140" y="85" width="1" height="26" fill="#00ff00"/><rect x="138" y="94" width="5" height="12" fill="#00ff00"/><rect x="139" y="95" width="3" height="10" fill="#fff"/><rect x="148" y="97" width="1" height="17" fill="#00ff00"/><rect x="146" y="103" width="5" height="5" fill="#00ff00"/><rect x="147" y="104" width="3" height="3" fill="#000"/><rect x="156" y="96" width="1" height="25" fill="#00ff00"/><rect x="154" y="102" width="5" height="3" fill="#00ff00"/><rect x="155" y="103" width="3" height="1" fill="#000"/><rect x="164" y="95" width="1" height="32" fill="#00ff00"/><rect x="162" y="100" width="5" height="9" fill="#00ff00"/><rect x="163" y="101" width="3" height="7" fill="#fff"/><rect x="172" y="97" width="1" height="108" fill="#00ff00"/><rect x="170" y="108" width="5" height="83" fill="#00ff00"/><rect x="171" y="109" width="3" height="81" fill="#fff"/><rect x="180" y="175" width="1" height="79" fill="#00ff00"/><rect x="178" y="192" width="5" height="56" fill="#00ff00"/><rect x="179" y="193" width="3" height="54" fill="#fff"/><rect x="188" y="246" width="1" height="28" fill="#00ff00"/><rect x="186" y="247" width="5" height="24" fill="#00ff00"/><rect x="187" y="248" width="3" height="22" fill="#fff"/><rect x="196" y="261" width="1" height="33" fill="#00ff00"/><rect x="194" y="273" width="5" height="15" fill="#00ff00"/><rect x="195" y="274" width="3" height="13" fill="#000"/><rect x="204" y="260" width="1" height="20" fill="#00ff00"/><rect x="202" y="261" width="5" height="15" fill="#00ff00"/><rect x="203" y="262" width="3" height="13" fill="#000"/><rect x="212" y="261" width="1" height="31" fill="#00ff00"/><rect x="210" y="261" width="5" height="29" fill="#00ff00"/><rect x="211" y="262" width="3" height="27" fill="#fff"/><rect x="220" y="273" width="1" height="37" fill="#00ff00"/><rect x="218" y="289" width="5" height="13" fill="#00ff00"/><rect x="219" y="290" width="3" height="11" fill="#fff"/><rect x="228" y="291" width="1" height="42" fill="#00ff00"/><rect x="226" y="300" width="5" height="18" fill="#00ff00"/><rect x="227" y="301" width="3" height="16" fill="#fff"/><rect x="236" y="290" width="1" height="32" fill="#00ff00"/><rect x="234" y="296" width="5" height="22" fill="#00ff00"/><rect x="235" y="297" width="3" height="20" fill="#000"/><rect x="244" y="269" width="1" height="31" fill="#00ff00"/><rect x="242" y="272" width="5" height="27" fill="#00ff00"/><rect x="243" y="273" width="3" height="25" fill="#000"/><rect x="252" y="252" width="1" height="32" fill="#00ff00"/><rect x="250" y="271" width="5" height="3" fill="#00ff00"/><rect x="251" y="272" width="3" height="1" fill="#000"/><rect x="260" y="253" width="1" height="48" fill="#00ff00"/><rect x="258" y="267" width="5" height="6" fill="#00ff00"/><rect x="259" y="268" width="3" height="4" fill="#000"/><rect x="268" y="265" width="1" height="52" fill="#00ff00"/><rect x="266" y="266" width="5" height="41" fill="#00ff00"/><rect x="267" y="267" width="3" height="39" fill="#fff"/><rect x="276" y="232" width="1" height="98" fill="#00ff00"/><rect x="274" y="235" width="5" height="73" fill="#00ff00"/><rect x="275" y="236" width="3" height="71" fill="#000"/><rect x="284" y="232" width="1" height="84" fill="#00ff00"/><rect x="282" y="237" width="5" height="36" fill="#00ff00"/><rect x="283" y="238" width="3" height="34" fill="#fff"/><rect x="292" y="267" width="1" height="23" fill="#00ff00"/><rect x="290" y="273" width="5" height="8" fill="#00ff00"/><rect x="291" y="274" width="3" height="6" fill="#fff"/><rect x="300" y="264" width="1" height="25" fill="#00ff00"/><rect x="298" y="275" width="5" height="7" fill="#00ff00"/><rect x="299" y="276" width="3" height="5" fill="#000"/><rect x="308" y="244" width="1" height="37" fill="#00ff00"/><rect x="306" y="250" width="5" height="28" fill="#00ff00"/><rect x="307" y="251" width="3" height="26" fill="#000"/><rect x="316" y="249" width="1" height="32" fill="#00ff00"/><rect x="314" y="250" width="5" height="23" fill="#00ff00"/><rect x="315" y="251" width="3" height="21" fill="#fff"/><rect x="324" y="264" width="1" height="42" fill="#00ff00"/><rect x="322" y="273" width="5" height="13" fill="#00ff00"/><rect x="323" y="274" width="3" height="11" fill="#fff"/><rect x="332" y="277" width="1" height="21" fill="#00ff00"/><rect x="330" y="283" width="5" height="11" fill="#00ff00"/><rect x="331" y="284" width="3" height="9" fill="#fff"/><rect x="340" y="270" width="1" height="29" fill="#00ff00"/><rect x="338" y="275" width="5" height="21" fill="#00ff00"/><rect x="339" y="276" width="3" height="19" fill="#000"/><rect x="348" y="241" width="1" height="37" fill="#00ff00"/><rect x="346" y="248" width="5" height="26" fill="#00ff00"/><rect x="347" y="249" width="3" height="24" fill="#000"/><rect x="356" y="221" width="1" height="30" fill="#00ff00"/><rect x="354" y="225" width="5" height="25" fill="#00ff00"/><rect x="355" y="226" width="3" height="23" fill="#000"/><rect x="364" y="199" width="1" height="33" fill="#00ff00"/><rect x="362" y="200" width="5" height="28" fill="#00ff00"/><rect x="363" y="201" width="3" height="26" fill="#000"/><rect x="372" y="201" width="1" height="61" fill="#00ff00"/><rect x="370" y="201" width="5" height="50" fill="#00ff00"/><rect x="371" y="202" width="3" height="48" fill="#fff"/><rect x="380" y="249" width="1" height="31" fill="#00ff00"/><rect x="378" y="252" width="5" height="20" fill="#00ff00"/><rect x="379" y="253" width="3" height="18" fill="#fff"/><rect x="388" y="264" width="1" height="21" fill="#00ff00"/><rect x="386" y="272" width="5" height="5" fill="#00ff00"/><rect x="387" y="273" width="3" height="3" fill="#fff"/><rect x="396" y="272" width="1" height="26" fill="#00ff00"/><rect x="394" y="277" width="5" height="5" fill="#00ff00"/><rect x="395" y="278" width="3" height="3" fill="#fff"/><rect x="404" y="247" width="1" height="38" fill="#00ff00"/><rect x="402" y="269" width="5" height="14" fill="#00ff00"/><rect x="403" y="270" width="3" height="12" fill="#000"/><rect x="412" y="254" width="1" height="29" fill="#00ff00"/><rect x="410" y="260" width="5" height="10" fill="#00ff00"/><rect x="411" y="261" width="3" height="8" fill="#000"/><rect x="420" y="254" width="1" height="48" fill="#00ff00"/><rect x="418" y="261" width="5" height="35" fill="#00ff00"/><rect x="419" y="262" width="3" height="33" fill="#fff"/><rect x="428" y="286" width="1" height="15" fill="#00ff00"/><rect x="426" y="292" width="5" height="2" fill="#00ff00"/><rect x="436" y="281" width="1" height="31" fill="#00ff00"/><rect x="434" y="281" width="5" height="17" fill="#00ff00"/><rect x="435" y="282" width="3" height="15" fill="#fff"/><rect x="444" y="285" width="1" height="18" fill="#00ff00"/><rect x="442" y="287" width="5" height="13" fill="#00ff00"/><rect x="443" y="288" width="3" height="11" fill="#000"/><rect x="452" y="252" width="1" height="38" fill="#00ff00"/><rect x="450" y="266" width="5" height="24" fill="#00ff00"/><rect x="451" y="267" width="3" height="22" fill="#000"/><rect x="460" y="243" width="1" height="30" fill="#00ff00"/><rect x="458" y="258" width="5" height="10" fill="#00ff00"/><rect x="459" y="259" width="3" height="8" fill="#000"/><rect x="468" y="227" width="1" height="38" fill="#00ff00"/><rect x="466" y="233" width="5" height="28" fill="#00ff00"/><rect x="467" y="234" width="3" height="26" fill="#000"/><rect x="476" y="224" width="1" height="18" fill="#00ff00"/><rect x="474" y="231" width="5" height="9" fill="#00ff00"/><rect x="475" y="232" width="3" height="7" fill="#fff"/><rect x="484" y="224" width="1" height="19" fill="#00ff00"/><rect x="482" y="239" width="5" height="3" fill="#00ff00"/><rect x="492" y="239" width="1" height="29" fill="#00ff00"/><rect x="490" y="240" width="5" height="12" fill="#00ff00"/><rect x="491" y="241" width="3" height="10" fill="#fff"/><rect x="500" y="248" width="1" height="21" fill="#00ff00"/><rect x="498" y="252" width="5" height="4" fill="#00ff00"/><rect x="499" y="253" width="3" height="2" fill="#fff"/><rect x="508" y="198" width="1" height="99" fill="#00ff00"/><rect x="506" y="233" width="5" height="22" fill="#00ff00"/><rect x="507" y="234" width="3" height="20" fill="#000"/><rect x="516" y="231" width="1" height="73" fill="#00ff00"/><rect x="514" y="233" width="5" height="28" fill="#00ff00"/><rect x="515" y="234" width="3" height="26" fill="#fff"/><rect x="524" y="243" width="1" height="26" fill="#00ff00"/><rect x="522" y="259" width="5" height="3" fill="#00ff00"/><rect x="532" y="257" width="1" height="15" fill="#00ff00"/><rect x="530" y="260" width="5" height="10" fill="#00ff00"/><rect x="531" y="261" width="3" height="8" fill="#fff"/><rect x="540" y="267" width="1" height="33" fill="#00ff00"/><rect x="538" y="269" width="5" height="30" fill="#00ff00"/><rect x="539" y="270" width="3" height="28" fill="#fff"/><rect x="548" y="295" width="1" height="31" fill="#00ff00"/><rect x="546" y="298" width="5" height="14" fill="#00ff00"/><rect x="547" y="299" width="3" height="12" fill="#fff"/><rect x="556" y="307" width="1" height="45" fill="#00ff00"/><rect x="554" y="312" width="5" height="26" fill="#00ff00"/><rect x="555" y="313" width="3" height="24" fill="#fff"/><rect x="564" y="323" width="1" height="33" fill="#00ff00"/><rect x="562" y="338" width="5" height="2" fill="#00ff00"/><rect x="572" y="314" width="1" height="31" fill="#00ff00"/><rect x="570" y="325" width="5" height="13" fill="#00ff00"/><rect x="571" y="326" width="3" height="11" fill="#000"/><rect x="580" y="311" width="1" height="41" fill="#00ff00"/><rect x="578" y="317" width="5" height="8" fill="#00ff00"/><rect x="579" y="318" width="3" height="6" fill="#000"/><rect x="588" y="289" width="1" height="31" fill="#00ff00"/><rect x="586" y="299" width="5" height="19" fill="#00ff00"/><rect x="587" y="300" width="3" height="17" fill="#000"/><rect x="596" y="290" width="1" height="24" fill="#00ff00"/><rect x="594" y="298" width="5" height="10" fill="#00ff00"/><rect x="595" y="299" width="3" height="8" fill="#fff"/><rect x="604" y="300" width="1" height="50" fill="#00ff00"/><rect x="602" y="306" width="5" height="39" fill="#00ff00"/><rect x="603" y="307" width="3" height="37" fill="#fff"/><rect x="612" y="323" width="1" height="55" fill="#00ff00"/><rect x="610" y="327" width="5" height="18" fill="#00ff00"/><rect x="611" y="328" width="3" height="16" fill="#000"/><rect x="620" y="321" width="1" height="35" fill="#00ff00"/><rect x="618" y="328" width="5" height="27" fill="#00ff00"/><rect x="619" y="329" width="3" height="25" fill="#fff"/><rect x="628" y="347" width="1" height="36" fill="#00ff00"/><rect x="626" y="353" width="5" height="27" fill="#00ff00"/><rect x="627" y="354" width="3" height="25" fill="#fff"/><rect x="636" y="376" width="1" height="21" fill="#00ff00"/><rect x="634" y="379" width="5" height="15" fill="#00ff00"/><rect x="635" y="380" width="3" height="13" fill="#fff"/><rect x="644" y="383" width="1" height="37" fill="#00ff00"/><rect x="642" y="393" width="5" height="20" fill="#00ff00"/><rect x="643" y="394" width="3" height="18" fill="#fff"/><rect x="652" y="395" width="1" height="25" fill="#00ff00"/><rect x="650" y="397" width="5" height="16" fill="#00ff00"/><rect x="651" y="398" width="3" height="14" fill="#000"/><rect x="660" y="359" width="1" height="44" fill="#00ff00"/><rect x="658" y="369" width="5" height="31" fill="#00ff00"/><rect x="659" y="370" width="3" height="29" fill="#000"/><rect x="668" y="356" width="1" height="21" fill="#00ff00"/><rect x="666" y="367" width="5" height="4" fill="#00ff00"/><rect x="667" y="368" width="3" height="2" fill="#000"/><rect x="676" y="363" width="1" height="22" fill="#00ff00"/><rect x="674" y="375" width="5" height="3" fill="#00ff00"/><rect x="675" y="376" width="3" height="1" fill="#fff"/><rect x="684" y="353" width="1" height="24" fill="#00ff00"/><rect x="682" y="359" width="5" height="17" fill="#00ff00"/><rect x="683" y="360" width="3" height="15" fill="#000"/><rect x="692" y="356" width="1" height="33" fill="#00ff00"/><rect x="690" y="358" width="5" height="25" fill="#00ff00"/><rect x="691" y="359" width="3" height="23" fill="#fff"/><rect x="700" y="343" width="1" height="42" fill="#00ff00"/><rect x="698" y="355" width="5" height="28" fill="#00ff00"/><rect x="699" y="356" width="3" height="26" fill="#000"/><rect x="708" y="344" width="1" height="15" fill="#00ff00"/><rect x="706" y="353" width="5" height="4" fill="#00ff00"/><rect x="707" y="354" width="3" height="2" fill="#000"/><rect x="716" y="347" width="1" height="12" fill="#00ff00"/><rect x="714" y="353" width="5" height="5" fill="#00ff00"/><rect x="715" y="354" width="3" height="3" fill="#fff"/><rect x="724" y="343" width="1" height="28" fill="#00ff00"/><rect x="722" y="355" width="5" height="3" fill="#00ff00"/><rect x="732" y="344" width="1" height="26" fill="#00ff00"/><rect x="730" y="354" width="5" height="12" fill="#00ff00"/><rect x="731" y="355" width="3" height="10" fill="#fff"/><rect x="740" y="363" width="1" height="12" fill="#00ff00"/><rect x="738" y="364" width="5" height="4" fill="#00ff00"/><rect x="739" y="365" width="3" height="2" fill="#fff"/><rect x="3" y="3" width="760" height="1" fill="#fff"/><rect x="3" y="429" width="760" height="1" fill="#fff"/><rect x="3" y="3" width="1" height="427" fill="#fff"/><rect x="762" y="3" width="1" height="427" fill="#fff"/><rect x="763" y="21" width="3" height="1" fill="#fff"/><text x="768" y="25" fill="#fff" stroke="#fff" stroke-width="0.25" font-size="9.3" font-family='"Liberation Sans", sans-serif'>0.6545</text><rect x="763" y="55" width="3" height="1" fill="#fff"/><text x="768" y="59" fill="#fff" stroke="#fff" stroke-width="0.25" font-size="9.3" font-family='"Liberation Sans", sans-serif'>0.6515</text><rect x="763" y="88" width="3" height="1" fill="#fff"/><text x="768" y="92" fill="#fff" stroke="#fff" stroke-width="0.25" font-size="9.3" font-family='"Liberation Sans", sans-serif'>0.6485</text><rect x="763" y="122" width="3" height="1" fill="#fff"/><text x="768" y="126" fill="#fff" stroke="#fff" stroke-width="0.25" font-size="9.3" font-family='"Liberation Sans", sans-serif'>0.6455</text><rect x="763" y="155" width="3" height="1" fill="#fff"/><text x="768" y="159" fill="#fff" stroke="#fff" stroke-width="0.25" font-size="9.3" font-family='"Liberation Sans", sans-serif'>0.6425</text><rect x="763" y="189" width="3" height="1" fill="#fff"/><text x="768" y="193" fill="#fff" stroke="#fff" stroke-width="0.25" font-size="9.3" font-family='"Liberation Sans", sans-serif'>0.6395</text><rect x="763" y="222" width="3" height="1" fill="#fff"/><text x="768" y="226" fill="#fff" stroke="#fff" stroke-width="0.25" font-size="9.3" font-family='"Liberation Sans", sans-serif'>0.6365</text><rect x="763" y="256" width="3" height="1" fill="#fff"/><text x="768" y="260" fill="#fff" stroke="#fff" stroke-width="0.25" font-size="9.3" font-family='"Liberation Sans", sans-serif'>0.6335</text><rect x="763" y="289" width="3" height="1" fill="#fff"/><text x="768" y="293" fill="#fff" stroke="#fff" stroke-width="0.25" font-size="9.3" font-family='"Liberation Sans", sans-serif'>0.6305</text><rect x="763" y="323" width="3" height="1" fill="#fff"/><text x="768" y="327" fill="#fff" stroke="#fff" stroke-width="0.25" font-size="9.3" font-family='"Liberation Sans", sans-serif'>0.6275</text><rect x="763" y="356" width="3" height="1" fill="#fff"/><text x="768" y="360" fill="#fff" stroke="#fff" stroke-width="0.25" font-size="9.3" font-family='"Liberation Sans", sans-serif'>0.6245</text><rect x="763" y="390" width="3" height="1" fill="#fff"/><text x="768" y="394" fill="#fff" stroke="#fff" stroke-width="0.25" font-size="9.3" font-family='"Liberation Sans", sans-serif'>0.6215</text><rect x="763" y="423" width="3" height="1" fill="#fff"/><text x="768" y="427" fill="#fff" stroke="#fff" stroke-width="0.25" font-size="9.3" font-family='"Liberation Sans", sans-serif'>0.6185</text><rect x="763" y="363" width="34" height="10" fill="#fff"/><text x="768" y="371" fill="#000" font-size="9" font-weight="bold" font-family='"Liberation Sans", sans-serif'>0.6235</text><text x="3" y="442" fill="#fff" font-size="9" font-weight="bold" font-family='"Liberation Sans", sans-serif'>31 Jan 2023</text><rect x="68" y="430" width="1" height="4" fill="#fff"/><text x="68" y="442" fill="#fff" font-size="9" font-weight="bold" font-family='"Liberation Sans", sans-serif'>1 Feb 08:00</text><rect x="132" y="430" width="1" height="4" fill="#fff"/><text x="132" y="442" fill="#fff" font-size="9" font-weight="bold" font-family='"Liberation Sans", sans-serif'>2 Feb 16:00</text><rect x="196" y="430" width="1" height="4" fill="#fff"/><text x="196" y="442" fill="#fff" font-size="9" font-weight="bold" font-family='"Liberation Sans", sans-serif'>6 Feb 00:00</text><rect x="260" y="430" width="1" height="4" fill="#fff"/><text x="260" y="442" fill="#fff" font-size="9" font-weight="bold" font-family='"Liberation Sans", sans-serif'>7 Feb 08:00</text><rect x="324" y="430" width="1" height="4" fill="#fff"/><text x="324" y="442" fill="#fff" font-size="9" font-weight="bold" font-family='"Liberation Sans", sans-serif'>8 Feb 16:00</text><rect x="388" y="430" width="1" height="4" fill="#fff"/><text x="388" y="442" fill="#fff" font-size="9" font-weight="bold" font-family='"Liberation Sans", sans-serif'>10 Feb 00:00</text><rect x="452" y="430" width="1" height="4" fill="#fff"/><text x="452" y="442" fill="#fff" font-size="9" font-weight="bold" font-family='"Liberation Sans", sans-serif'>13 Feb 08:00</text><rect x="516" y="430" width="1" height="4" fill="#fff"/><text x="516" y="442" fill="#fff" font-size="9" font-weight="bold" font-family='"Liberation Sans", sans-serif'>14 Feb 16:00</text><rect x="580" y="430" width="1" height="4" fill="#fff"/><text x="580" y="442" fill="#fff" font-size="9" font-weight="bold" font-family='"Liberation Sans", sans-serif'>16 Feb 00:00</text><rect x="644" y="430" width="1" height="4" fill="#fff"/><text x="644" y="442" fill="#fff" font-size="9" font-weight="bold" font-family='"Liberation Sans", sans-serif'>17 Feb 08:00</text><rect x="708" y="430" width="1" height="4" fill="#fff"/><text x="708" y="442" fill="#fff" font-size="9" font-weight="bold" font-family='"Liberation Sans", sans-serif'>20 Feb 16:00</text><path d="M7 9h7l-3.5 4z" fill="#fff" shape-rendering="auto"/><text x="18" y="15" fill="#fff" stroke="#fff" stroke-width="0.3" font-size="9.4" font-family='"Liberation Sans", sans-serif' xml:space="preserve">NZDUSD,H4  0.6238 0.6239 0.6230 0.6235</text></svg>
<div style="position:absolute;left:227px;top:555px;width:797px;height:21px;background:#f0f0f0"></div>
<div style="position:absolute;left:227px;top:557px;width:797px;height:1px;background:#000"></div>
<div class="t" style="left:244px;top:561px;font-size:11px;color:#707070">EURUSD,Daily</div>
<div class="t" style="left:339px;top:561px;font-size:11px;color:#707070">USDCHF,H4</div>
<div class="t" style="left:424px;top:561px;font-size:11px;color:#707070">GBPUSD,H1</div>
<div class="t" style="left:508px;top:561px;font-size:11px;color:#707070">USDJPY,H1</div>
<div class="t" style="left:589px;top:561px;font-size:11px;color:#707070">AUDUSD,H1</div>
<div class="t" style="left:675px;top:561px;font-size:11px;color:#707070">USDCHF,H1</div>
<div class="t" style="left:759px;top:561px;font-size:11px;color:#707070">USDCAD,Daily</div>
<div class="t" style="left:855px;top:561px;font-size:11px;color:#707070">GOLD,H4</div>
<div class="t" style="left:326px;top:560px;font-size:12px;color:#707070">|</div>
<div class="t" style="left:411px;top:560px;font-size:12px;color:#707070">|</div>
<div class="t" style="left:495px;top:560px;font-size:12px;color:#707070">|</div>
<div class="t" style="left:575.5px;top:560px;font-size:12px;color:#707070">|</div>
<div class="t" style="left:663px;top:560px;font-size:12px;color:#707070">|</div>
<div class="t" style="left:747px;top:560px;font-size:12px;color:#707070">|</div>
<div class="t" style="left:843px;top:560px;font-size:12px;color:#707070">|</div>
<div style="position:absolute;left:916px;top:557px;width:78px;height:19px;background:#fff;border-left:1px solid #000;border-bottom:1px solid #000;box-sizing:border-box"></div>
<div class="t" style="left:928px;top:561px;font-size:11px;color:#1e1e1e">NZDUSD,H4</div>
<div style="position:absolute;left:994px;top:557px;width:30px;height:20px;background:#ececec"></div>
<div style="position:absolute;left:1003px;top:557px;width:21px;height:1px;background:#000"></div>
<svg width="30" height="20" style="position:absolute;left:994px;top:557px"><path d="M9.5 9.5l4-3.5v7z" fill="#a8a8a8"/><path d="M28 9.5l-4-3.5v7z" fill="#000"/></svg>
<div style="position:absolute;left:8px;top:576px;width:1016px;height:1px;background:#a0a0a0"></div>
<div style="position:absolute;left:9px;top:595px;width:13px;height:113px;background:linear-gradient(90deg,#d6e2f0,#c0d0e3)"></div>
<div class="t" style="left:12px;top:580px;font-size:13px;color:#000;font-weight:bold">&#215;</div>
<div class="t" style="left:11px;top:706px;font-size:11px;color:#3d4c66;transform:rotate(-90deg);transform-origin:0 0;">Terminal</div>
<div style="position:absolute;left:23px;top:582px;width:1001px;height:105px;background:#fff;border-top:1px solid #a8a8a8;border-left:1px solid #a8a8a8;box-sizing:border-box"></div>
<div style="position:absolute;left:24px;top:583px;width:987px;height:21px;background:linear-gradient(#fff 40%,#eef0f3)"></div>
<div style="position:absolute;left:24px;top:604px;width:987px;height:1px;background:#d5d5d5"></div>
<div class="t" style="left:31px;top:588px;font-size:12px;color:#1e1e1e">Name</div>
<div class="t" style="left:208px;top:588px;font-size:12px;color:#1e1e1e">Description</div>
<div class="t" style="left:848px;top:588px;font-size:12px;color:#1e1e1e">Rating</div>
<div class="t" style="left:962px;top:588px;font-size:12px;color:#1e1e1e">Date</div>
<div style="position:absolute;left:24px;top:605px;width:987px;height:20px;background:#fff"></div>
<div class="t" style="left:45px;top:610px;font-size:12.6px;color:#1e1e1e;transform:scaleX(0.93);transform-origin:0 0">period_converter_All_kai</div>
<div class="t" style="left:206px;top:610px;font-size:12.6px;color:#1e1e1e;transform:scaleX(0.935);transform-origin:0 0">Convert historical data from M1 to M1, M5, M15, M30, H1, H4, D1, W1 and MN, specifying the start date.</div>
<div class="t" style="left:940px;top:610px;font-size:11px;color:#1e1e1e;width:66px;text-align:right">2023.02.17</div>
<svg style="position:absolute;left:846px;top:610px" width="11" height="11"><path d="M5.5 0.5l1.5 3.4 3.6.3-2.8 2.4.9 3.6-3.2-2-3.2 2 .9-3.6L.4 4.2l3.6-.3z" fill="#f3d36b" stroke="#b08a40" stroke-width="0.9"/></svg>
<svg style="position:absolute;left:864px;top:610px" width="11" height="11"><path d="M5.5 0.5l1.5 3.4 3.6.3-2.8 2.4.9 3.6-3.2-2-3.2 2 .9-3.6L.4 4.2l3.6-.3z" fill="#f3d36b" stroke="#b08a40" stroke-width="0.9"/></svg>
<svg style="position:absolute;left:882px;top:610px" width="11" height="11"><path d="M5.5 0.5l1.5 3.4 3.6.3-2.8 2.4.9 3.6-3.2-2-3.2 2 .9-3.6L.4 4.2l3.6-.3z" fill="#f3d36b" stroke="#b08a40" stroke-width="0.9"/></svg>
<svg style="position:absolute;left:900px;top:610px" width="11" height="11"><path d="M5.5 0.5l1.5 3.4 3.6.3-2.8 2.4.9 3.6-3.2-2-3.2 2 .9-3.6L.4 4.2l3.6-.3z" fill="#f3d36b" stroke="#b08a40" stroke-width="0.9"/></svg>
<div style="position:absolute;left:24px;top:625px;width:987px;height:20px;background:#ececec"></div>
<div style="position:absolute;left:24px;top:625px;width:987px;height:1px;background:#d4d4d4"></div>
<div class="t" style="left:45px;top:630px;font-size:12.6px;color:#1e1e1e;transform:scaleX(0.93);transform-origin:0 0">London trade</div>
<div class="t" style="left:206px;top:630px;font-size:12.6px;color:#1e1e1e;transform:scaleX(0.935);transform-origin:0 0">trade 35 minute after london session and stop close all 3 hour after london sessioni dont know about coding , i made t...</div>
<div class="t" style="left:940px;top:630px;font-size:11px;color:#1e1e1e;width:66px;text-align:right">2023.02.05</div>
<svg style="position:absolute;left:846px;top:630px" width="11" height="11"><path d="M5.5 0.5l1.5 3.4 3.6.3-2.8 2.4.9 3.6-3.2-2-3.2 2 .9-3.6L.4 4.2l3.6-.3z" fill="#f3d36b" stroke="#b08a40" stroke-width="0.9"/></svg>
<svg style="position:absolute;left:864px;top:630px" width="11" height="11"><path d="M5.5 0.5l1.5 3.4 3.6.3-2.8 2.4.9 3.6-3.2-2-3.2 2 .9-3.6L.4 4.2l3.6-.3z" fill="#f3d36b" stroke="#b08a40" stroke-width="0.9"/></svg>
<svg style="position:absolute;left:882px;top:630px" width="11" height="11"><path d="M5.5 0.5l1.5 3.4 3.6.3-2.8 2.4.9 3.6-3.2-2-3.2 2 .9-3.6L.4 4.2l3.6-.3z" fill="#fff" stroke="#b0b0b0" stroke-width="0.9"/></svg>
<svg style="position:absolute;left:900px;top:630px" width="11" height="11"><path d="M5.5 0.5l1.5 3.4 3.6.3-2.8 2.4.9 3.6-3.2-2-3.2 2 .9-3.6L.4 4.2l3.6-.3z" fill="#fff" stroke="#b0b0b0" stroke-width="0.9"/></svg>
<div style="position:absolute;left:24px;top:645px;width:987px;height:20px;background:#fff"></div>
<div style="position:absolute;left:24px;top:645px;width:987px;height:1px;background:#d4d4d4"></div>
<div class="t" style="left:45px;top:650px;font-size:12.6px;color:#1e1e1e;transform:scaleX(0.93);transform-origin:0 0">GridTrading Algorithm at v...</div>
<div class="t" style="left:206px;top:650px;font-size:12.6px;color:#1e1e1e;transform:scaleX(0.935);transform-origin:0 0">This EA can do Grid trading and has useful functions for Gridtrading included</div>
<div class="t" style="left:940px;top:650px;font-size:11px;color:#1e1e1e;width:66px;text-align:right">2023.01.26</div>
<svg style="position:absolute;left:846px;top:650px" width="11" height="11"><path d="M5.5 0.5l1.5 3.4 3.6.3-2.8 2.4.9 3.6-3.2-2-3.2 2 .9-3.6L.4 4.2l3.6-.3z" fill="#f3d36b" stroke="#b08a40" stroke-width="0.9"/></svg>
<svg style="position:absolute;left:864px;top:650px" width="11" height="11"><path d="M5.5 0.5l1.5 3.4 3.6.3-2.8 2.4.9 3.6-3.2-2-3.2 2 .9-3.6L.4 4.2l3.6-.3z" fill="#f3d36b" stroke="#b08a40" stroke-width="0.9"/></svg>
<svg style="position:absolute;left:882px;top:650px" width="11" height="11"><path d="M5.5 0.5l1.5 3.4 3.6.3-2.8 2.4.9 3.6-3.2-2-3.2 2 .9-3.6L.4 4.2l3.6-.3z" fill="#f3d36b" stroke="#b08a40" stroke-width="0.9"/></svg>
<svg style="position:absolute;left:900px;top:650px" width="11" height="11"><path d="M5.5 0.5l1.5 3.4 3.6.3-2.8 2.4.9 3.6-3.2-2-3.2 2 .9-3.6L.4 4.2l3.6-.3z" fill="#f3d36b" stroke="#b08a40" stroke-width="0.9"/></svg>
<div style="position:absolute;left:24px;top:665px;width:987px;height:20px;background:#ececec"></div>
<div style="position:absolute;left:24px;top:665px;width:987px;height:1px;background:#d4d4d4"></div>
<div class="t" style="left:45px;top:670px;font-size:12.6px;color:#1e1e1e;transform:scaleX(0.93);transform-origin:0 0">Support and Resistance Ind...</div>
<div class="t" style="left:206px;top:670px;font-size:12.6px;color:#1e1e1e;transform:scaleX(0.935);transform-origin:0 0">This Indicator shows the potential breakout/stop levels.</div>
<div class="t" style="left:940px;top:670px;font-size:11px;color:#1e1e1e;width:66px;text-align:right">2023.01.26</div>
<svg style="position:absolute;left:846px;top:670px" width="11" height="11"><path d="M5.5 0.5l1.5 3.4 3.6.3-2.8 2.4.9 3.6-3.2-2-3.2 2 .9-3.6L.4 4.2l3.6-.3z" fill="#f3d36b" stroke="#b08a40" stroke-width="0.9"/></svg>
<svg style="position:absolute;left:864px;top:670px" width="11" height="11"><path d="M5.5 0.5l1.5 3.4 3.6.3-2.8 2.4.9 3.6-3.2-2-3.2 2 .9-3.6L.4 4.2l3.6-.3z" fill="#f3d36b" stroke="#b08a40" stroke-width="0.9"/></svg>
<svg style="position:absolute;left:882px;top:670px" width="11" height="11"><path d="M5.5 0.5l1.5 3.4 3.6.3-2.8 2.4.9 3.6-3.2-2-3.2 2 .9-3.6L.4 4.2l3.6-.3z" fill="#f3d36b" stroke="#b08a40" stroke-width="0.9"/></svg>
<svg style="position:absolute;left:900px;top:670px" width="11" height="11"><path d="M5.5 0.5l1.5 3.4 3.6.3-2.8 2.4.9 3.6-3.2-2-3.2 2 .9-3.6L.4 4.2l3.6-.3z" fill="#f3d36b" stroke="#b08a40" stroke-width="0.9"/></svg>
<div style="position:absolute;left:203px;top:583px;width:1px;height:104px;background:#d8d8d8"></div>
<div style="position:absolute;left:842px;top:583px;width:1px;height:104px;background:#d8d8d8"></div>
<div style="position:absolute;left:930px;top:583px;width:1px;height:104px;background:#d8d8d8"></div>
<div style="position:absolute;left:1011px;top:583px;width:13px;height:104px;background:#ececec"></div>
<svg width="1024" height="110" viewBox="0 580 1024 110" style="position:absolute;left:0;top:580px"><path d="M29.5 612.5h6.5v5.5h2.5v3h-8z" fill="#f4d66a" stroke="#a8801a"/><path d="M27.5 613.5a1.5 1.5 0 0 1 3 0v3h-2a1 1 0 0 1-1-1z" fill="#e8c048" stroke="#a8801a"/><path d="M30.5 618.5h5.5a1.3 1.3 0 0 1 0 2.5" fill="#f8e490" stroke="#a8801a"/><path d="M27.5 642.5v-2.5q0-2.5 3-3h5q3 .5 3 3v2.5z" fill="#3a6a98"/><path d="M31.5 637.5l1.5 3 1.5-3z" fill="#fff"/><rect x="30.5" y="634" width="5" height="3.5" rx="1.5" fill="#dfe8f0" stroke="#3a6a98" stroke-width="0.8"/><path d="M28 632.5l5-1.8 5 1.8-5 1.8z" fill="#2a5a88"/><path d="M30.5 633v1.5h5v-1.5" fill="#2a5a88"/><path d="M27.5 662.5v-2.5q0-2.5 3-3h5q3 .5 3 3v2.5z" fill="#3a6a98"/><path d="M31.5 657.5l1.5 3 1.5-3z" fill="#fff"/><rect x="30.5" y="654" width="5" height="3.5" rx="1.5" fill="#dfe8f0" stroke="#3a6a98" stroke-width="0.8"/><path d="M28 652.5l5-1.8 5 1.8-5 1.8z" fill="#2a5a88"/><path d="M30.5 653v1.5h5v-1.5" fill="#2a5a88"/><rect x="27.5" y="670.5" width="10" height="10" fill="#f6d86a" stroke="#b89028"/><path d="M30 679q1.5-.5 2-3.5t3.5-3.5" stroke="#333" fill="none" stroke-width="1"/><path d="M30.5 675.5h4" stroke="#333" stroke-width="0.8"/><path d="M996.5 591.5h7l-3.5 5.5z" fill="none" stroke="#8a8a8a"/><path d="M1014.5 593l4.5-4 4.5 4z" fill="#404040"/><path d="M1015 679l4 3.5 4-3.5z" fill="#404040"/><rect x="1012.5" y="600.5" width="12" height="15" rx="2" fill="#f4f4f4" stroke="#9a9a9a"/></svg>
<div style="position:absolute;left:23px;top:686px;width:1001px;height:2px;background:#101010"></div>
<div class="t" style="left:37px;top:691px;font-size:12px;color:#808080">Trade</div>
<div class="t" style="left:86px;top:691px;font-size:12px;color:#808080">Exposure</div>
<div class="t" style="left:154px;top:691px;font-size:12px;color:#808080">Account History</div>
<div class="t" style="left:259px;top:691px;font-size:12px;color:#808080">News</div>
<div class="t" style="left:308px;top:691px;font-size:12px;color:#808080">Alerts</div>
<div class="t" style="left:358px;top:691px;font-size:12px;color:#808080">Mailbox</div>
<div class="t" style="left:427px;top:691px;font-size:12px;color:#808080">Market</div>
<div class="t" style="left:484px;top:691px;font-size:12px;color:#808080">Signals</div>
<div class="t" style="left:541px;top:691px;font-size:12px;color:#808080">Articles</div>
<div class="t" style="left:682px;top:691px;font-size:10.6px;color:#808080">Experts</div>
<div class="t" style="left:739px;top:691px;font-size:12px;color:#808080">Journal</div>
<div class="t" style="left:74.5px;top:690px;font-size:12px;color:#808080">|</div>
<div class="t" style="left:141.5px;top:690px;font-size:12px;color:#808080">|</div>
<div class="t" style="left:247.5px;top:690px;font-size:12px;color:#808080">|</div>
<div class="t" style="left:296.5px;top:690px;font-size:12px;color:#808080">|</div>
<div class="t" style="left:346.5px;top:690px;font-size:12px;color:#808080">|</div>
<div class="t" style="left:415.5px;top:690px;font-size:12px;color:#808080">|</div>
<div class="t" style="left:472.5px;top:690px;font-size:12px;color:#808080">|</div>
<div class="t" style="left:529.5px;top:690px;font-size:12px;color:#808080">|</div>
<div class="t" style="left:727.5px;top:690px;font-size:12px;color:#808080">|</div>
<div class="t" style="left:785.5px;top:690px;font-size:12px;color:#808080">|</div>
<div style="position:absolute;left:598px;top:687px;width:74px;height:21px;background:#fff;border-left:1px solid #000;border-right:1px solid #000;box-sizing:border-box"></div>
<div class="t" style="left:607px;top:691px;font-size:11.2px;color:#1e1e1e">Code Base</div>
<div class="t" style="left:401px;top:698px;font-size:9px;color:#e00">7</div>
<div class="t" style="left:583px;top:698px;font-size:9px;color:#e00">1</div>
</body></html>
